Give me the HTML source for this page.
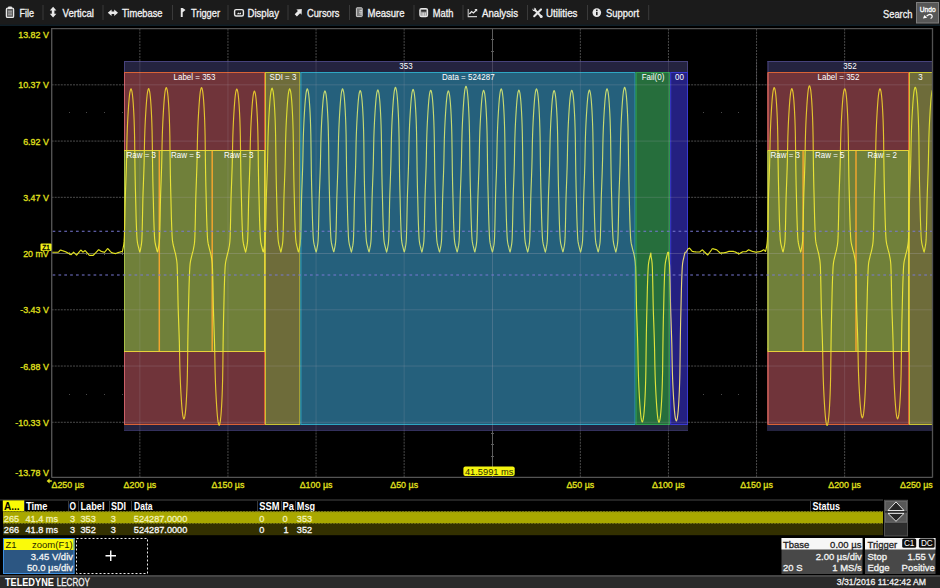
<!DOCTYPE html>
<html lang="en"><head><meta charset="utf-8"><title>ARINC 429 decode</title>
<style>html,body{margin:0;padding:0;background:#000;overflow:hidden}svg{display:block}text{white-space:pre}</style>
</head><body>
<svg width="940" height="588" viewBox="0 0 940 588" font-family='"Liberation Sans", sans-serif'>
<defs><clipPath id="gc"><rect x="52" y="29" width="880" height="448"/></clipPath></defs>
<rect x="0" y="0" width="940" height="588" fill="#000" />
<rect x="0" y="0" width="940" height="26" fill="#1b1b1b" />
<rect x="0" y="24.7" width="940" height="1.3" fill="#0f1f28" />
<text x="19.5" y="16.5" font-size="10" fill="#f2f2f2" stroke="#f2f2f2" stroke-width="0.3" text-anchor="start" textLength="14.5" lengthAdjust="spacingAndGlyphs" >File</text>
<line x1="43" y1="5" x2="43" y2="20" stroke="#3a3a3a" stroke-width="1" />
<text x="62.5" y="16.5" font-size="10" fill="#f2f2f2" stroke="#f2f2f2" stroke-width="0.3" text-anchor="start" textLength="31.5" lengthAdjust="spacingAndGlyphs" >Vertical</text>
<line x1="103" y1="5" x2="103" y2="20" stroke="#3a3a3a" stroke-width="1" />
<text x="122" y="16.5" font-size="10" fill="#f2f2f2" stroke="#f2f2f2" stroke-width="0.3" text-anchor="start" textLength="40.5" lengthAdjust="spacingAndGlyphs" >Timebase</text>
<line x1="172.5" y1="5" x2="172.5" y2="20" stroke="#3a3a3a" stroke-width="1" />
<text x="191" y="16.5" font-size="10" fill="#f2f2f2" stroke="#f2f2f2" stroke-width="0.3" text-anchor="start" textLength="29" lengthAdjust="spacingAndGlyphs" >Trigger</text>
<line x1="228" y1="5" x2="228" y2="20" stroke="#3a3a3a" stroke-width="1" />
<text x="247.5" y="16.5" font-size="10" fill="#f2f2f2" stroke="#f2f2f2" stroke-width="0.3" text-anchor="start" textLength="31.5" lengthAdjust="spacingAndGlyphs" >Display</text>
<line x1="288" y1="5" x2="288" y2="20" stroke="#3a3a3a" stroke-width="1" />
<text x="307" y="16.5" font-size="10" fill="#f2f2f2" stroke="#f2f2f2" stroke-width="0.3" text-anchor="start" textLength="32.5" lengthAdjust="spacingAndGlyphs" >Cursors</text>
<line x1="349.5" y1="5" x2="349.5" y2="20" stroke="#3a3a3a" stroke-width="1" />
<text x="367.5" y="16.5" font-size="10" fill="#f2f2f2" stroke="#f2f2f2" stroke-width="0.3" text-anchor="start" textLength="37" lengthAdjust="spacingAndGlyphs" >Measure</text>
<line x1="414" y1="5" x2="414" y2="20" stroke="#3a3a3a" stroke-width="1" />
<text x="432.8" y="16.5" font-size="10" fill="#f2f2f2" stroke="#f2f2f2" stroke-width="0.3" text-anchor="start" textLength="20.7" lengthAdjust="spacingAndGlyphs" >Math</text>
<line x1="463" y1="5" x2="463" y2="20" stroke="#3a3a3a" stroke-width="1" />
<text x="482" y="16.5" font-size="10" fill="#f2f2f2" stroke="#f2f2f2" stroke-width="0.3" text-anchor="start" textLength="36" lengthAdjust="spacingAndGlyphs" >Analysis</text>
<line x1="527.5" y1="5" x2="527.5" y2="20" stroke="#3a3a3a" stroke-width="1" />
<text x="546" y="16.5" font-size="10" fill="#f2f2f2" stroke="#f2f2f2" stroke-width="0.3" text-anchor="start" textLength="31.5" lengthAdjust="spacingAndGlyphs" >Utilities</text>
<line x1="587.5" y1="5" x2="587.5" y2="20" stroke="#3a3a3a" stroke-width="1" />
<text x="606" y="16.5" font-size="10" fill="#f2f2f2" stroke="#f2f2f2" stroke-width="0.3" text-anchor="start" textLength="33" lengthAdjust="spacingAndGlyphs" >Support</text>
<line x1="648.7" y1="5" x2="648.7" y2="20" stroke="#3a3a3a" stroke-width="1" />
<text x="883" y="17.6" font-size="10.5" fill="#f2f2f2" stroke="#f2f2f2" stroke-width="0.3" text-anchor="start" textLength="29.5" lengthAdjust="spacingAndGlyphs" >Search</text>
<rect x="6.4" y="8.2" width="7.2" height="9.2" rx="1.2" fill="#555" stroke="#e8e8e8" stroke-width="1.3"/><rect x="8" y="6.4" width="4" height="2.6" rx="0.8" fill="#e8e8e8"/><path d="M8 11.2h4M8 13h4M8 14.8h4" stroke="#bdbdbd" stroke-width="0.9"/>
<path d="M53.1 6.8 l3.3 3.6 h-2 v3.4 h2 l-3.3 3.6 l-3.3 -3.6 h2 v-3.4 h-2 z" fill="#e8e8e8"/>
<path d="M107.8 12.7 l3.8 -3.3 v2.1 h2.6 v-2.1 l3.8 3.3 l-3.8 3.3 v-2.1 h-2.6 v2.1 z" fill="#e8e8e8"/>
<path d="M180.8 7.9 h1.9 l2.8 2.2 l-2.8 2.2 v4.7 h-1.9 z" fill="#e8e8e8"/>
<rect x="234.6" y="9.6" width="8.8" height="6.4" rx="1.5" fill="none" stroke="#e8e8e8" stroke-width="1.4"/><path d="M236.8 14.2 l1.6 -1.8 l1.2 1.1 l1.4 -1.3 v2 z" fill="#e8e8e8"/>
<path d="M301.8 9 l-5.4 0.5 l1.5 1.5 l-3.2 3.2 l2.2 2.2 l3.2 -3.2 l1.5 1.5 z" fill="#e8e8e8"/>
<rect x="356.4" y="7.8" width="5.8" height="8.8" rx="0.6" fill="#7a7a7a" stroke="#cfcfcf" stroke-width="1"/><path d="M359.6 10.4 h2.4 M359 12.2 h3 M359.6 14 h2.4" stroke="#eee" stroke-width="0.8"/>
<rect x="419.9" y="8.7" width="7.6" height="7.8" rx="1.6" fill="#8a8a8a" stroke="#e8e8e8" stroke-width="1.3"/><rect x="421.2" y="10" width="5" height="1.6" fill="#2a2a2a"/><path d="M422.1 12.6 v3.2 M423.7 12.6 v3.2 M425.3 12.6 v3.2" stroke="#e8e8e8" stroke-width="0.9"/>
<path d="M468.2 9 v7.6 h8.8" stroke="#c8c8c8" stroke-width="1.1" fill="none"/><path d="M469.4 14 l2.2 -2.4 l1.8 1.4 l3 -3" stroke="#e8e8e8" stroke-width="1.3" fill="none"/><path d="M474.4 9 h2.8 v2.8 z" fill="#e8e8e8"/>
<path d="M534.4 9.6 l6.6 6.6 M541 9.4 l-6.8 6.8" stroke="#e8e8e8" stroke-width="2.1" stroke-linecap="round"/><circle cx="534.3" cy="9.5" r="1.8" fill="#e8e8e8"/><circle cx="541.2" cy="16.4" r="1.5" fill="#e8e8e8"/><circle cx="533.6" cy="8.8" r="0.9" fill="#1b1b1b"/>
<circle cx="596.8" cy="12.6" r="4.3" fill="#e8e8e8"/><rect x="596" y="11.8" width="1.6" height="3.4" fill="#222"/><rect x="596" y="9.6" width="1.6" height="1.4" fill="#222"/>
<rect x="916.5" y="2.5" width="22" height="20.5" fill="#575757" stroke="#7e7e7e" stroke-width="1"/>
<text x="919.8" y="11.5" font-size="7" fill="#fff" stroke="#fff" stroke-width="0.3" text-anchor="start" textLength="15.8" lengthAdjust="spacingAndGlyphs" >Undo</text>
<path d="M926.6 16.2 Q929.6 13.2 931.6 15 Q933.2 16.8 930.6 18.6" fill="none" stroke="#fff" stroke-width="1.2"/><path d="M922.9 18.5 l1.5 -3.6 l2.7 2.9 z" fill="#fff"/>
<line x1="139.85" y1="28.6" x2="139.85" y2="477" stroke="#4c4c4c" stroke-width="1" stroke-dasharray="2 1.06"/>
<line x1="227.95" y1="28.6" x2="227.95" y2="477" stroke="#4c4c4c" stroke-width="1" stroke-dasharray="2 1.06"/>
<line x1="316.05" y1="28.6" x2="316.05" y2="477" stroke="#4c4c4c" stroke-width="1" stroke-dasharray="2 1.06"/>
<line x1="404.15" y1="28.6" x2="404.15" y2="477" stroke="#4c4c4c" stroke-width="1" stroke-dasharray="2 1.06"/>
<line x1="580.35" y1="28.6" x2="580.35" y2="477" stroke="#4c4c4c" stroke-width="1" stroke-dasharray="2 1.06"/>
<line x1="668.45" y1="28.6" x2="668.45" y2="477" stroke="#4c4c4c" stroke-width="1" stroke-dasharray="2 1.06"/>
<line x1="756.55" y1="28.6" x2="756.55" y2="477" stroke="#4c4c4c" stroke-width="1" stroke-dasharray="2 1.06"/>
<line x1="844.65" y1="28.6" x2="844.65" y2="477" stroke="#4c4c4c" stroke-width="1" stroke-dasharray="2 1.06"/>
<line x1="51.6" y1="84.84" x2="932.5" y2="84.84" stroke="#4c4c4c" stroke-width="1" stroke-dasharray="2 1.06"/>
<line x1="51.6" y1="141.08" x2="932.5" y2="141.08" stroke="#4c4c4c" stroke-width="1" stroke-dasharray="2 1.06"/>
<line x1="51.6" y1="197.32" x2="932.5" y2="197.32" stroke="#4c4c4c" stroke-width="1" stroke-dasharray="2 1.06"/>
<line x1="51.6" y1="309.8" x2="932.5" y2="309.8" stroke="#4c4c4c" stroke-width="1" stroke-dasharray="2 1.06"/>
<line x1="51.6" y1="366.04" x2="932.5" y2="366.04" stroke="#4c4c4c" stroke-width="1" stroke-dasharray="2 1.06"/>
<line x1="51.6" y1="422.28" x2="932.5" y2="422.28" stroke="#4c4c4c" stroke-width="1" stroke-dasharray="2 1.06"/>
<path d="M69 112.5h1M86 112.5h1M104 112.5h1M122 112.5h1M139 112.5h1M157 112.5h1M174 112.5h1M192 112.5h1M210 112.5h1M227 112.5h1M245 112.5h1M263 112.5h1M280 112.5h1M298 112.5h1M315 112.5h1M333 112.5h1M351 112.5h1M368 112.5h1M386 112.5h1M403 112.5h1M421 112.5h1M439 112.5h1M456 112.5h1M474 112.5h1M492 112.5h1M509 112.5h1M527 112.5h1M544 112.5h1M562 112.5h1M580 112.5h1M597 112.5h1M615 112.5h1M632 112.5h1M650 112.5h1M668 112.5h1M685 112.5h1M703 112.5h1M721 112.5h1M738 112.5h1M756 112.5h1M773 112.5h1M791 112.5h1M809 112.5h1M826 112.5h1M844 112.5h1M862 112.5h1M879 112.5h1M897 112.5h1M914 112.5h1M69 394.5h1M86 394.5h1M104 394.5h1M122 394.5h1M139 394.5h1M157 394.5h1M174 394.5h1M192 394.5h1M210 394.5h1M227 394.5h1M245 394.5h1M263 394.5h1M280 394.5h1M298 394.5h1M315 394.5h1M333 394.5h1M351 394.5h1M368 394.5h1M386 394.5h1M403 394.5h1M421 394.5h1M439 394.5h1M456 394.5h1M474 394.5h1M492 394.5h1M509 394.5h1M527 394.5h1M544 394.5h1M562 394.5h1M580 394.5h1M597 394.5h1M615 394.5h1M632 394.5h1M650 394.5h1M668 394.5h1M685 394.5h1M703 394.5h1M721 394.5h1M738 394.5h1M756 394.5h1M773 394.5h1M791 394.5h1M809 394.5h1M826 394.5h1M844 394.5h1M862 394.5h1M879 394.5h1M897 394.5h1M914 394.5h1" stroke="#4a4a4a" stroke-width="1" fill="none"/>
<line x1="492.5" y1="28.6" x2="492.5" y2="477" stroke="#5c5c5c" stroke-width="1" />
<line x1="51.6" y1="253.5" x2="932.5" y2="253.5" stroke="#5c5c5c" stroke-width="1" />
<path d="M491.0 39.5h3M491.0 51.5h3M491.0 62.5h3M491.0 73.5h3M491.0 84.5h3M491.0 96.5h3M491.0 107.5h3M491.0 118.5h3M491.0 129.5h3M491.0 141.5h3M491.0 152.5h3M491.0 163.5h3M491.0 174.5h3M491.0 186.5h3M491.0 197.5h3M491.0 208.5h3M491.0 219.5h3M491.0 231.5h3M491.0 242.5h3M491.0 253.5h3M491.0 264.5h3M491.0 276.5h3M491.0 287.5h3M491.0 298.5h3M491.0 309.5h3M491.0 321.5h3M491.0 332.5h3M491.0 343.5h3M491.0 354.5h3M491.0 366.5h3M491.0 377.5h3M491.0 388.5h3M491.0 399.5h3M491.0 411.5h3M491.0 422.5h3M491.0 433.5h3M491.0 444.5h3M491.0 456.5h3M491.0 467.5h3M69.5 252.0v3M86.5 252.0v3M104.5 252.0v3M122.5 252.0v3M139.5 252.0v3M157.5 252.0v3M174.5 252.0v3M192.5 252.0v3M210.5 252.0v3M227.5 252.0v3M245.5 252.0v3M263.5 252.0v3M280.5 252.0v3M298.5 252.0v3M315.5 252.0v3M333.5 252.0v3M351.5 252.0v3M368.5 252.0v3M386.5 252.0v3M403.5 252.0v3M421.5 252.0v3M439.5 252.0v3M456.5 252.0v3M474.5 252.0v3M492.5 252.0v3M509.5 252.0v3M527.5 252.0v3M544.5 252.0v3M562.5 252.0v3M580.5 252.0v3M597.5 252.0v3M615.5 252.0v3M632.5 252.0v3M650.5 252.0v3M668.5 252.0v3M685.5 252.0v3M703.5 252.0v3M721.5 252.0v3M738.5 252.0v3M756.5 252.0v3M773.5 252.0v3M791.5 252.0v3M809.5 252.0v3M826.5 252.0v3M844.5 252.0v3M862.5 252.0v3M879.5 252.0v3M897.5 252.0v3M914.5 252.0v3" stroke="#5c5c5c" stroke-width="1" fill="none"/>
<g clip-path="url(#gc)">
<rect x="124" y="61" width="564" height="11" fill="#24233f" fill-opacity="1"/>
<line x1="124" y1="61.5" x2="688" y2="61.5" stroke="#47437c" stroke-width="1" />
<line x1="124.5" y1="61" x2="124.5" y2="431" stroke="#47437c" stroke-width="1" />
<line x1="687.5" y1="61" x2="687.5" y2="431" stroke="#47437c" stroke-width="1" />
<rect x="124" y="425" width="564" height="6" fill="#24233f" fill-opacity="1"/>
<line x1="124" y1="430.5" x2="688" y2="430.5" stroke="#33305c" stroke-width="1" />
<rect x="124" y="72" width="141" height="81" fill="#70343a" fill-opacity="1"/>
<rect x="124.5" y="72.5" width="140" height="80" fill="none" stroke="#d96336" stroke-width="1"/>
<rect x="124" y="348" width="141" height="77" fill="#70343a" fill-opacity="1"/>
<rect x="124.5" y="348.5" width="140" height="76" fill="none" stroke="#d96336" stroke-width="1"/>
<line x1="124.5" y1="73" x2="124.5" y2="150" stroke="#cc6068" stroke-width="1" />
<line x1="124.5" y1="352" x2="124.5" y2="424" stroke="#cc6068" stroke-width="1" />
<rect x="124" y="150" width="141" height="202" fill="#70803a" fill-opacity="1"/>
<rect x="124.5" y="150.5" width="140" height="201" fill="none" stroke="#e6d23a" stroke-width="1"/>
<line x1="159.3" y1="151" x2="159.3" y2="351" stroke="#f2a52e" stroke-width="1.5" />
<line x1="212.2" y1="151" x2="212.2" y2="351" stroke="#f2a52e" stroke-width="1.5" />
<line x1="124.5" y1="151" x2="124.5" y2="351" stroke="#a8c048" stroke-width="1" />
<rect x="265" y="72" width="35.4" height="353" fill="#6e6c3a" fill-opacity="1"/>
<rect x="265.5" y="72.5" width="34.4" height="352" fill="none" stroke="#c9c233" stroke-width="1"/>
<rect x="300.4" y="72" width="335.2" height="353" fill="#25607c" fill-opacity="1"/>
<rect x="300.9" y="72.5" width="334.2" height="352" fill="none" stroke="#2ea6c2" stroke-width="1"/>
<rect x="635.6" y="72" width="34.6" height="353" fill="#266e3c" fill-opacity="1"/>
<rect x="636.1" y="72.5" width="33.6" height="352" fill="none" stroke="#2fa052" stroke-width="1"/>
<rect x="670.2" y="72" width="17.8" height="353" fill="#242080" fill-opacity="1"/>
<rect x="670.7" y="72.5" width="16.8" height="352" fill="none" stroke="#3a3ad0" stroke-width="1"/>
<rect x="767.5" y="61" width="165.5" height="11" fill="#24233f" fill-opacity="1"/>
<line x1="767.5" y1="61.5" x2="933" y2="61.5" stroke="#47437c" stroke-width="1" />
<line x1="768" y1="61" x2="768" y2="431" stroke="#47437c" stroke-width="1" />
<rect x="767.5" y="425" width="165.5" height="6" fill="#24233f" fill-opacity="1"/>
<rect x="767.5" y="72" width="141.5" height="81" fill="#70343a" fill-opacity="1"/>
<rect x="768" y="72.5" width="140.5" height="80" fill="none" stroke="#d96336" stroke-width="1"/>
<rect x="767.5" y="348" width="141.5" height="77" fill="#70343a" fill-opacity="1"/>
<rect x="768" y="348.5" width="140.5" height="76" fill="none" stroke="#d96336" stroke-width="1"/>
<line x1="768" y1="73" x2="768" y2="150" stroke="#cc6068" stroke-width="1" />
<line x1="768" y1="352" x2="768" y2="424" stroke="#cc6068" stroke-width="1" />
<rect x="767.5" y="150" width="141.5" height="202" fill="#70803a" fill-opacity="1"/>
<rect x="768" y="150.5" width="140.5" height="201" fill="none" stroke="#e6d23a" stroke-width="1"/>
<line x1="803.1" y1="151" x2="803.1" y2="351" stroke="#f2a52e" stroke-width="1.5" />
<line x1="856" y1="151" x2="856" y2="351" stroke="#f2a52e" stroke-width="1.5" />
<line x1="768" y1="151" x2="768" y2="351" stroke="#a8c048" stroke-width="1" />
<rect x="909" y="72" width="31" height="353" fill="#6e6c3a" fill-opacity="1"/>
<rect x="909.5" y="72.5" width="30" height="352" fill="none" stroke="#c9c233" stroke-width="1"/>
<line x1="139.85" y1="61" x2="139.85" y2="431" stroke="#b8b0c0" stroke-width="1" stroke-opacity="0.17"/>
<line x1="227.95" y1="61" x2="227.95" y2="431" stroke="#b8b0c0" stroke-width="1" stroke-opacity="0.17"/>
<line x1="316.05" y1="61" x2="316.05" y2="431" stroke="#b8b0c0" stroke-width="1" stroke-opacity="0.17"/>
<line x1="404.15" y1="61" x2="404.15" y2="431" stroke="#b8b0c0" stroke-width="1" stroke-opacity="0.17"/>
<line x1="492.5" y1="61" x2="492.5" y2="431" stroke="#b8b0c0" stroke-width="1" stroke-opacity="0.24"/>
<line x1="580.35" y1="61" x2="580.35" y2="431" stroke="#b8b0c0" stroke-width="1" stroke-opacity="0.17"/>
<line x1="668.45" y1="61" x2="668.45" y2="431" stroke="#b8b0c0" stroke-width="1" stroke-opacity="0.17"/>
<line x1="756.55" y1="61" x2="756.55" y2="431" stroke="#b8b0c0" stroke-width="1" stroke-opacity="0.17"/>
<line x1="844.65" y1="61" x2="844.65" y2="431" stroke="#b8b0c0" stroke-width="1" stroke-opacity="0.17"/>
<line x1="124" y1="84.84" x2="688" y2="84.84" stroke="#b8b0c0" stroke-width="1" stroke-opacity="0.2"/>
<line x1="767.5" y1="84.84" x2="933" y2="84.84" stroke="#b8b0c0" stroke-width="1" stroke-opacity="0.2"/>
<line x1="124" y1="141.08" x2="688" y2="141.08" stroke="#b8b0c0" stroke-width="1" stroke-opacity="0.2"/>
<line x1="767.5" y1="141.08" x2="933" y2="141.08" stroke="#b8b0c0" stroke-width="1" stroke-opacity="0.2"/>
<line x1="124" y1="197.32" x2="688" y2="197.32" stroke="#b8b0c0" stroke-width="1" stroke-opacity="0.2"/>
<line x1="767.5" y1="197.32" x2="933" y2="197.32" stroke="#b8b0c0" stroke-width="1" stroke-opacity="0.2"/>
<line x1="124" y1="253.5" x2="688" y2="253.5" stroke="#b8b0c0" stroke-width="1" stroke-opacity="0.26"/>
<line x1="767.5" y1="253.5" x2="933" y2="253.5" stroke="#b8b0c0" stroke-width="1" stroke-opacity="0.26"/>
<line x1="124" y1="309.8" x2="688" y2="309.8" stroke="#b8b0c0" stroke-width="1" stroke-opacity="0.2"/>
<line x1="767.5" y1="309.8" x2="933" y2="309.8" stroke="#b8b0c0" stroke-width="1" stroke-opacity="0.2"/>
<line x1="124" y1="366.04" x2="688" y2="366.04" stroke="#b8b0c0" stroke-width="1" stroke-opacity="0.2"/>
<line x1="767.5" y1="366.04" x2="933" y2="366.04" stroke="#b8b0c0" stroke-width="1" stroke-opacity="0.2"/>
<line x1="124" y1="422.28" x2="688" y2="422.28" stroke="#b8b0c0" stroke-width="1" stroke-opacity="0.2"/>
<line x1="767.5" y1="422.28" x2="933" y2="422.28" stroke="#b8b0c0" stroke-width="1" stroke-opacity="0.2"/>
<defs><path id="wv" d="M52.10 252.2 L52.35 252.2 L52.60 252.2 L52.85 252.2 L53.10 252.2 L53.35 252.2 L53.60 252.2 L53.85 252.2 L54.10 252.2 L54.35 252.2 L54.60 252.2 L54.85 252.2 L55.10 252.2 L55.35 252.2 L55.60 252.2 L55.85 252.2 L56.10 252.2 L56.35 252.2 L56.60 252.2 L56.85 252.2 L57.10 252.2 L57.35 252.2 L57.60 252.2 L57.85 252.2 L58.10 252.2 L58.35 252.1 L58.60 251.9 L58.85 251.6 L59.10 251.4 L59.35 251.1 L59.60 250.8 L59.85 250.6 L60.10 250.3 L60.35 250.1 L60.60 250.1 L60.85 250.1 L61.10 250.2 L61.35 250.3 L61.60 250.4 L61.85 250.5 L62.10 250.6 L62.35 250.7 L62.60 250.7 L62.85 250.8 L63.10 250.9 L63.35 251.0 L63.60 251.1 L63.85 251.2 L64.10 251.2 L64.35 251.3 L64.60 251.4 L64.85 251.5 L65.10 251.6 L65.35 251.6 L65.60 251.8 L65.85 251.9 L66.10 252.0 L66.35 252.2 L66.60 252.3 L66.85 252.4 L67.10 252.6 L67.35 252.7 L67.60 252.8 L67.85 253.0 L68.10 253.1 L68.35 253.2 L68.60 253.4 L68.85 253.5 L69.10 253.6 L69.35 253.8 L69.60 253.9 L69.85 254.0 L70.10 254.2 L70.35 254.3 L70.60 254.4 L70.85 254.6 L71.10 254.7 L71.35 254.4 L71.60 254.2 L71.85 253.9 L72.10 253.7 L72.35 253.4 L72.60 253.2 L72.85 252.9 L73.10 252.7 L73.35 252.4 L73.60 252.2 L73.85 252.4 L74.10 252.7 L74.35 252.9 L74.60 253.2 L74.85 253.4 L75.10 253.6 L75.35 253.9 L75.60 254.1 L75.85 254.4 L76.10 254.6 L76.35 254.9 L76.60 255.1 L76.85 254.8 L77.10 254.5 L77.35 254.2 L77.60 253.9 L77.85 253.6 L78.10 253.3 L78.35 253.0 L78.60 252.7 L78.85 252.4 L79.10 252.1 L79.35 251.8 L79.60 251.5 L79.85 251.2 L80.10 250.9 L80.35 250.7 L80.60 250.4 L80.85 250.1 L81.10 250.2 L81.35 250.5 L81.60 250.7 L81.85 251.0 L82.10 251.3 L82.35 251.5 L82.60 251.8 L82.85 252.0 L83.10 252.1 L83.35 251.9 L83.60 251.7 L83.85 251.5 L84.10 251.3 L84.35 251.1 L84.60 250.9 L84.85 250.7 L85.10 250.5 L85.35 250.8 L85.60 251.1 L85.85 251.4 L86.10 251.6 L86.35 251.9 L86.60 252.2 L86.85 252.5 L87.10 252.8 L87.35 253.1 L87.60 253.3 L87.85 253.6 L88.10 253.9 L88.35 254.2 L88.60 254.5 L88.85 254.8 L89.10 255.1 L89.35 255.3 L89.60 255.4 L89.85 255.4 L90.10 255.4 L90.35 255.4 L90.60 255.4 L90.85 255.4 L91.10 255.4 L91.35 255.4 L91.60 255.4 L91.85 255.4 L92.10 255.4 L92.35 255.4 L92.60 255.4 L92.85 255.4 L93.10 255.4 L93.35 255.2 L93.60 255.0 L93.85 254.7 L94.10 254.5 L94.35 254.2 L94.60 253.9 L94.85 253.7 L95.10 253.4 L95.35 253.1 L95.60 252.9 L95.85 252.6 L96.10 252.3 L96.35 252.1 L96.60 251.8 L96.85 251.6 L97.10 251.3 L97.35 251.0 L97.60 250.8 L97.85 250.5 L98.10 250.2 L98.35 250.0 L98.60 249.7 L98.85 249.7 L99.10 249.9 L99.35 250.1 L99.60 250.3 L99.85 250.4 L100.10 250.6 L100.35 250.8 L100.60 251.0 L100.85 251.2 L101.10 251.3 L101.35 251.4 L101.60 251.5 L101.85 251.5 L102.10 251.6 L102.35 251.7 L102.60 251.8 L102.85 251.8 L103.10 251.9 L103.35 252.0 L103.60 252.0 L103.85 252.1 L104.10 252.2 L104.35 252.3 L104.60 252.2 L104.85 251.9 L105.10 251.6 L105.35 251.3 L105.60 251.0 L105.85 250.7 L106.10 250.4 L106.35 250.1 L106.60 249.8 L106.85 249.5 L107.10 249.2 L107.35 248.9 L107.60 248.6 L107.85 248.7 L108.10 248.9 L108.35 249.2 L108.60 249.5 L108.85 249.7 L109.10 250.0 L109.35 250.3 L109.60 250.5 L109.85 250.8 L110.10 251.1 L110.35 251.4 L110.60 251.6 L110.85 251.9 L111.10 252.2 L111.35 252.4 L111.60 252.6 L111.85 252.7 L112.10 252.8 L112.35 252.8 L112.60 252.9 L112.85 253.0 L113.10 253.0 L113.35 253.1 L113.60 253.2 L113.85 253.2 L114.10 253.3 L114.35 253.3 L114.60 253.4 L114.85 253.5 L115.10 253.5 L115.35 253.6 L115.60 253.5 L115.85 253.4 L116.10 253.3 L116.35 253.2 L116.60 253.2 L116.85 253.1 L117.10 253.0 L117.35 252.9 L117.60 252.8 L117.85 252.7 L118.10 252.6 L118.35 252.6 L118.60 252.5 L118.85 252.4 L119.10 252.3 L119.35 252.2 L119.60 252.2 L119.85 252.1 L120.10 252.0 L120.35 251.9 L120.60 251.9 L120.85 251.8 L121.10 251.7 L121.35 251.7 L121.60 251.6 L121.85 251.5 L122.10 251.5 L122.35 251.6 L122.60 250.6 L122.85 249.4 L123.10 248.1 L123.35 246.8 L123.60 245.5 L123.85 243.8 L124.10 241.4 L124.35 237.2 L124.60 228.5 L124.85 218.1 L125.10 204.9 L125.35 195.3 L125.60 188.3 L125.85 181.7 L126.10 174.7 L126.35 167.5 L126.60 157.9 L126.85 144.3 L127.10 134.7 L127.35 128.0 L127.60 122.4 L127.85 117.6 L128.10 113.3 L128.35 109.3 L128.60 105.5 L128.85 102.2 L129.10 99.2 L129.35 96.6 L129.60 94.4 L129.85 92.6 L130.10 91.3 L130.35 90.3 L130.60 89.5 L130.85 88.9 L131.10 88.9 L131.35 89.3 L131.60 90.1 L131.85 91.1 L132.10 92.3 L132.35 94.0 L132.60 96.2 L132.85 98.7 L133.10 101.7 L133.35 105.3 L133.60 109.5 L133.85 114.3 L134.10 120.0 L134.35 127.6 L134.60 137.8 L134.85 158.4 L135.10 175.0 L135.35 187.0 L135.60 196.5 L135.85 206.8 L136.10 217.1 L136.35 224.5 L136.60 230.9 L136.85 236.2 L137.10 239.8 L137.35 241.8 L137.60 243.4 L137.85 244.6 L138.10 245.6 L138.35 246.6 L138.60 247.6 L138.85 248.7 L139.10 249.7 L139.35 250.6 L139.60 251.5 L139.85 252.1 L140.10 251.2 L140.35 250.0 L140.60 248.8 L140.85 247.5 L141.10 246.2 L141.35 244.7 L141.60 242.7 L141.85 240.0 L142.10 233.4 L142.35 223.6 L142.60 211.8 L142.85 199.6 L143.10 191.7 L143.35 185.2 L143.60 178.2 L143.85 171.3 L144.10 163.3 L144.35 151.3 L144.60 138.7 L144.85 131.2 L145.10 125.0 L145.35 119.9 L145.60 115.3 L145.85 111.2 L146.10 107.3 L146.35 103.7 L146.60 100.5 L146.85 97.7 L147.10 95.3 L147.35 93.3 L147.60 91.7 L147.85 90.6 L148.10 89.7 L148.35 89.0 L148.60 88.6 L148.85 88.8 L149.10 89.5 L149.35 90.3 L149.60 91.4 L149.85 92.8 L150.10 94.8 L150.35 97.1 L150.60 99.9 L150.85 103.2 L151.10 107.1 L151.35 111.6 L151.60 116.7 L151.85 123.2 L152.10 131.9 L152.35 146.4 L152.60 166.9 L152.85 181.2 L153.10 191.6 L153.35 201.1 L153.60 211.9 L153.85 220.9 L154.10 227.7 L154.35 233.6 L154.60 238.2 L154.85 240.8 L155.10 242.6 L155.35 244.0 L155.60 245.1 L155.85 246.1 L156.10 247.1 L156.35 248.1 L156.60 249.2 L156.85 250.1 L157.10 251.0 L157.35 251.9 L157.60 251.7 L157.85 250.6 L158.10 249.4 L158.35 248.1 L158.60 246.8 L158.85 245.5 L159.10 243.8 L159.35 241.5 L159.60 237.4 L159.85 228.8 L160.10 218.3 L160.35 205.0 L160.60 195.2 L160.85 188.1 L161.10 181.5 L161.35 174.4 L161.60 167.1 L161.85 157.6 L162.10 144.0 L162.35 134.1 L162.60 127.3 L162.85 121.6 L163.10 116.7 L163.35 112.4 L163.60 108.3 L163.85 104.5 L164.10 101.1 L164.35 98.1 L164.60 95.5 L164.85 93.3 L165.10 91.4 L165.35 90.0 L165.60 89.0 L165.85 88.2 L166.10 87.6 L166.35 87.6 L166.60 88.0 L166.85 88.8 L167.10 89.7 L167.35 90.9 L167.60 92.7 L167.85 94.8 L168.10 97.3 L168.35 100.4 L168.60 104.0 L168.85 108.2 L169.10 113.0 L169.35 118.7 L169.60 126.2 L169.85 136.4 L170.10 156.8 L170.35 173.8 L170.60 186.0 L170.85 195.7 L171.10 206.0 L171.35 216.4 L171.60 224.0 L171.85 230.5 L172.10 235.9 L172.35 239.6 L172.60 241.7 L172.85 243.2 L173.10 244.5 L173.35 245.6 L173.60 246.5 L173.85 247.5 L174.10 248.6 L174.35 249.6 L174.60 250.6 L174.85 251.5 L175.10 252.3 L175.35 253.2 L175.60 254.3 L175.85 255.6 L176.10 257.0 L176.35 258.3 L176.60 259.8 L176.85 261.8 L177.10 264.5 L177.35 271.0 L177.60 281.0 L177.85 292.8 L178.10 305.5 L178.35 313.6 L178.60 320.3 L178.85 327.4 L179.10 334.4 L179.35 342.4 L179.60 354.5 L179.85 367.5 L180.10 375.3 L180.35 381.6 L180.60 386.9 L180.85 391.6 L181.10 395.8 L181.35 399.8 L181.60 403.5 L181.85 406.8 L182.10 409.6 L182.35 412.0 L182.60 414.1 L182.85 415.8 L183.10 416.9 L183.35 417.9 L183.60 418.6 L183.85 419.0 L184.10 418.8 L184.35 418.1 L184.60 417.3 L184.85 416.2 L185.10 414.7 L185.35 412.8 L185.60 410.4 L185.85 407.6 L186.10 404.3 L186.35 400.3 L186.60 395.8 L186.85 390.5 L187.10 384.0 L187.35 375.2 L187.60 361.0 L187.85 339.8 L188.10 325.1 L188.35 314.4 L188.60 304.7 L188.85 293.7 L189.10 284.4 L189.35 277.5 L189.60 271.4 L189.85 266.7 L190.10 263.9 L190.35 262.1 L190.60 260.6 L190.85 259.5 L191.10 258.5 L191.35 257.5 L191.60 256.4 L191.85 255.3 L192.10 254.3 L192.35 253.4 L192.60 252.5 L192.85 251.7 L193.10 250.7 L193.35 249.5 L193.60 248.2 L193.85 246.9 L194.10 245.5 L194.35 243.9 L194.60 241.6 L194.85 237.6 L195.10 229.2 L195.35 218.8 L195.60 205.5 L195.85 195.5 L196.10 188.4 L196.35 181.7 L196.60 174.6 L196.85 167.4 L197.10 158.1 L197.35 144.5 L197.60 134.4 L197.85 127.5 L198.10 121.8 L198.35 116.9 L198.60 112.5 L198.85 108.5 L199.10 104.7 L199.35 101.2 L199.60 98.2 L199.85 95.6 L200.10 93.3 L200.35 91.4 L200.60 90.1 L200.85 89.1 L201.10 88.2 L201.35 87.7 L201.60 87.6 L201.85 88.0 L202.10 88.7 L202.35 89.7 L202.60 90.9 L202.85 92.6 L203.10 94.7 L203.35 97.2 L203.60 100.3 L203.85 103.9 L204.10 108.0 L204.35 112.8 L204.60 118.5 L204.85 125.9 L205.10 136.0 L205.35 155.9 L205.60 173.2 L205.85 185.6 L206.10 195.3 L206.35 205.5 L206.60 216.1 L206.85 223.8 L207.10 230.3 L207.35 235.7 L207.60 239.5 L207.85 241.6 L208.10 243.2 L208.35 244.5 L208.60 245.5 L208.85 246.5 L209.10 247.5 L209.35 248.6 L209.60 249.6 L209.85 250.5 L210.10 251.4 L210.35 252.3 L210.60 253.2 L210.85 254.4 L211.10 255.7 L211.35 257.1 L211.60 258.4 L211.85 260.0 L212.10 262.0 L212.35 264.8 L212.60 271.3 L212.85 281.6 L213.10 293.8 L213.35 307.1 L213.60 315.6 L213.85 322.6 L214.10 329.9 L214.35 337.2 L214.60 345.5 L214.85 357.8 L215.10 371.4 L215.35 379.7 L215.60 386.3 L215.85 391.8 L216.10 396.6 L216.35 401.1 L216.60 405.2 L216.85 409.1 L217.10 412.5 L217.35 415.5 L217.60 418.0 L217.85 420.2 L218.10 421.9 L218.35 423.1 L218.60 424.1 L218.85 424.9 L219.10 425.3 L219.35 425.1 L219.60 424.4 L219.85 423.5 L220.10 422.5 L220.35 421.0 L220.60 418.9 L220.85 416.5 L221.10 413.6 L221.35 410.1 L221.60 406.1 L221.85 401.4 L222.10 396.0 L222.35 389.3 L222.60 380.3 L222.85 366.0 L223.10 343.8 L223.35 328.4 L223.60 317.1 L223.85 307.1 L224.10 295.7 L224.35 286.0 L224.60 278.7 L224.85 272.3 L225.10 267.4 L225.35 264.4 L225.60 262.5 L225.85 261.0 L226.10 259.8 L226.35 258.7 L226.60 257.7 L226.85 256.6 L227.10 255.5 L227.35 254.5 L227.60 253.5 L227.85 252.6 L228.10 251.7 L228.35 250.7 L228.60 249.6 L228.85 248.3 L229.10 247.0 L229.35 245.7 L229.60 244.0 L229.85 241.8 L230.10 238.0 L230.35 229.8 L230.60 219.5 L230.85 206.5 L231.10 196.3 L231.35 189.2 L231.60 182.7 L231.85 175.6 L232.10 168.5 L232.35 159.5 L232.60 146.0 L232.85 135.8 L233.10 128.9 L233.35 123.2 L233.60 118.3 L233.85 114.0 L234.10 109.9 L234.35 106.1 L234.60 102.7 L234.85 99.7 L235.10 97.1 L235.35 94.9 L235.60 93.0 L235.85 91.6 L236.10 90.6 L236.35 89.8 L236.60 89.2 L236.85 89.0 L237.10 89.5 L237.35 90.2 L237.60 91.1 L237.85 92.3 L238.10 94.0 L238.35 96.1 L238.60 98.5 L238.85 101.5 L239.10 105.0 L239.35 109.2 L239.60 113.9 L239.85 119.4 L240.10 126.7 L240.35 136.6 L240.60 155.9 L240.85 173.4 L241.10 185.8 L241.35 195.5 L241.60 205.5 L241.85 216.0 L242.10 223.7 L242.35 230.2 L242.60 235.7 L242.85 239.5 L243.10 241.6 L243.35 243.2 L243.60 244.5 L243.85 245.5 L244.10 246.5 L244.35 247.5 L244.60 248.6 L244.85 249.6 L245.10 250.5 L245.35 251.4 L245.60 252.2 L245.85 251.3 L246.10 250.2 L246.35 249.0 L246.60 247.7 L246.85 246.4 L247.10 245.0 L247.35 243.2 L247.60 240.6 L247.85 234.7 L248.10 225.2 L248.35 214.1 L248.60 201.5 L248.85 193.5 L249.10 186.9 L249.35 180.2 L249.60 173.3 L249.85 165.7 L250.10 154.5 L250.35 141.6 L250.60 133.8 L250.85 127.6 L251.10 122.5 L251.35 117.9 L251.60 113.8 L251.85 109.9 L252.10 106.4 L252.35 103.2 L252.60 100.4 L252.85 98.0 L253.10 96.0 L253.35 94.3 L253.60 93.2 L253.85 92.2 L254.10 91.5 L254.35 91.1 L254.60 91.3 L254.85 91.9 L255.10 92.7 L255.35 93.7 L255.60 95.1 L255.85 97.0 L256.10 99.2 L256.35 101.9 L256.60 105.1 L256.85 108.8 L257.10 113.2 L257.35 118.1 L257.60 124.3 L257.85 132.6 L258.10 145.4 L258.35 166.3 L258.60 180.8 L258.85 191.4 L259.10 200.7 L259.35 211.3 L259.60 220.5 L259.85 227.3 L260.10 233.3 L260.35 237.9 L260.60 240.8 L260.85 242.6 L261.10 244.0 L261.35 245.1 L261.60 246.1 L261.85 247.0 L262.10 248.1 L262.35 249.1 L262.60 250.0 L262.85 251.0 L263.10 251.8 L263.35 251.8 L263.60 250.8 L263.85 249.6 L264.10 248.3 L264.35 247.0 L264.60 245.7 L264.85 244.1 L265.10 241.8 L265.35 238.2 L265.60 230.0 L265.85 219.8 L266.10 206.8 L266.35 196.4 L266.60 189.2 L266.85 182.6 L267.10 175.5 L267.35 168.4 L267.60 159.5 L267.85 146.0 L268.10 135.5 L268.35 128.5 L268.60 122.8 L268.85 117.8 L269.10 113.5 L269.35 109.4 L269.60 105.6 L269.85 102.1 L270.10 99.0 L270.35 96.4 L270.60 94.2 L270.85 92.3 L271.10 90.8 L271.35 89.8 L271.60 89.0 L271.85 88.4 L272.10 88.2 L272.35 88.6 L272.60 89.4 L272.85 90.3 L273.10 91.4 L273.35 93.1 L273.60 95.2 L273.85 97.7 L274.10 100.7 L274.35 104.2 L274.60 108.3 L274.85 113.0 L275.10 118.5 L275.35 125.7 L275.60 135.5 L275.85 154.5 L276.10 172.4 L276.35 185.1 L276.60 194.8 L276.85 204.8 L277.10 215.5 L277.35 223.3 L277.60 229.9 L277.85 235.4 L278.10 239.3 L278.35 241.5 L278.60 243.1 L278.85 244.4 L279.10 245.5 L279.35 246.4 L279.60 247.4 L279.85 248.5 L280.10 249.5 L280.35 250.5 L280.60 251.4 L280.85 252.2 L281.10 251.3 L281.35 250.2 L281.60 249.0 L281.85 247.7 L282.10 246.4 L282.35 245.0 L282.60 243.1 L282.85 240.5 L283.10 234.8 L283.35 225.3 L283.60 214.1 L283.85 201.2 L284.10 192.9 L284.35 186.3 L284.60 179.4 L284.85 172.5 L285.10 164.8 L285.35 153.7 L285.60 140.5 L285.85 132.4 L286.10 126.1 L286.35 120.8 L286.60 116.2 L286.85 112.0 L287.10 108.0 L287.35 104.4 L287.60 101.1 L287.85 98.3 L288.10 95.9 L288.35 93.8 L288.60 92.1 L288.85 90.9 L289.10 90.0 L289.35 89.3 L289.60 88.8 L289.85 89.0 L290.10 89.6 L290.35 90.4 L290.60 91.4 L290.85 92.8 L291.10 94.7 L291.35 96.9 L291.60 99.6 L291.85 102.8 L292.10 106.6 L292.35 111.0 L292.60 116.0 L292.85 122.2 L293.10 130.5 L293.35 143.1 L293.60 164.4 L293.85 179.3 L294.10 190.1 L294.35 199.6 L294.60 210.2 L294.85 219.8 L295.10 226.7 L295.35 232.8 L295.60 237.6 L295.85 240.5 L296.10 242.4 L296.35 243.8 L296.60 245.0 L296.85 246.0 L297.10 246.9 L297.35 248.0 L297.60 249.0 L297.85 250.0 L298.10 250.9 L298.35 251.8 L298.60 251.8 L298.85 250.8 L299.10 249.7 L299.35 248.4 L299.60 247.1 L299.85 245.8 L300.10 244.2 L300.35 242.0 L300.60 238.5 L300.85 230.5 L301.10 220.3 L301.35 207.5 L301.60 196.9 L301.85 189.7 L302.10 183.1 L302.35 176.1 L302.60 169.0 L302.85 160.3 L303.10 147.0 L303.35 136.2 L303.60 129.2 L303.85 123.4 L304.10 118.5 L304.35 114.1 L304.60 110.1 L304.85 106.3 L305.10 102.8 L305.35 99.7 L305.60 97.1 L305.85 94.9 L306.10 92.9 L306.35 91.5 L306.60 90.5 L306.85 89.6 L307.10 89.0 L307.35 88.8 L307.60 89.2 L307.85 89.9 L308.10 90.9 L308.35 92.0 L308.60 93.6 L308.85 95.7 L309.10 98.1 L309.35 101.1 L309.60 104.6 L309.85 108.6 L310.10 113.3 L310.35 118.8 L310.60 125.9 L310.85 135.5 L311.10 154.0 L311.35 172.1 L311.60 184.9 L311.85 194.7 L312.10 204.6 L312.35 215.2 L312.60 223.1 L312.85 229.7 L313.10 235.3 L313.35 239.2 L313.60 241.5 L313.85 243.1 L314.10 244.4 L314.35 245.4 L314.60 246.4 L314.85 247.4 L315.10 248.5 L315.35 249.5 L315.60 250.4 L315.85 251.3 L316.10 252.2 L316.35 251.4 L316.60 250.3 L316.85 249.1 L317.10 247.8 L317.35 246.5 L317.60 245.1 L317.85 243.3 L318.10 240.8 L318.35 235.4 L318.60 226.0 L318.85 215.1 L319.10 202.2 L319.35 194.0 L319.60 187.4 L319.85 180.7 L320.10 173.8 L320.35 166.3 L320.60 155.5 L320.85 142.3 L321.10 134.2 L321.35 127.9 L321.60 122.7 L321.85 118.1 L322.10 114.0 L322.35 110.0 L322.60 106.4 L322.85 103.2 L323.10 100.4 L323.35 98.0 L323.60 95.9 L323.85 94.2 L324.10 93.0 L324.35 92.1 L324.60 91.4 L324.85 90.9 L325.10 91.1 L325.35 91.6 L325.60 92.4 L325.85 93.4 L326.10 94.7 L326.35 96.6 L326.60 98.8 L326.85 101.4 L327.10 104.6 L327.35 108.3 L327.60 112.6 L327.85 117.6 L328.10 123.6 L328.35 131.7 L328.60 143.7 L328.85 164.8 L329.10 179.7 L329.35 190.6 L329.60 199.9 L329.85 210.4 L330.10 219.9 L330.35 226.7 L330.60 232.8 L330.85 237.6 L331.10 240.6 L331.35 242.4 L331.60 243.8 L331.85 245.0 L332.10 246.0 L332.35 247.0 L332.60 248.0 L332.85 249.0 L333.10 250.0 L333.35 250.9 L333.60 251.7 L333.85 251.8 L334.10 250.9 L334.35 249.7 L334.60 248.4 L334.85 247.1 L335.10 245.8 L335.35 244.2 L335.60 242.1 L335.85 238.7 L336.10 230.9 L336.35 220.7 L336.60 208.0 L336.85 197.2 L337.10 189.9 L337.35 183.4 L337.60 176.3 L337.85 169.3 L338.10 160.7 L338.35 147.5 L338.60 136.6 L338.85 129.5 L339.10 123.7 L339.35 118.7 L339.60 114.3 L339.85 110.2 L340.10 106.4 L340.35 102.9 L340.60 99.8 L340.85 97.2 L341.10 94.9 L341.35 93.0 L341.60 91.5 L341.85 90.5 L342.10 89.6 L342.35 89.0 L342.60 88.8 L342.85 89.2 L343.10 89.9 L343.35 90.8 L343.60 91.9 L343.85 93.5 L344.10 95.6 L344.35 98.0 L344.60 101.0 L344.85 104.4 L345.10 108.5 L345.35 113.1 L345.60 118.5 L345.85 125.5 L346.10 135.1 L346.35 153.0 L346.60 171.5 L346.85 184.5 L347.10 194.3 L347.35 204.2 L347.60 214.8 L347.85 222.9 L348.10 229.5 L348.35 235.1 L348.60 239.1 L348.85 241.4 L349.10 243.0 L349.35 244.3 L349.60 245.4 L349.85 246.4 L350.10 247.4 L350.35 248.4 L350.60 249.4 L350.85 250.4 L351.10 251.3 L351.35 252.1 L351.60 251.4 L351.85 250.3 L352.10 249.2 L352.35 247.8 L352.60 246.6 L352.85 245.2 L353.10 243.4 L353.35 240.9 L353.60 235.6 L353.85 226.4 L354.10 215.5 L354.35 202.5 L354.60 194.1 L354.85 187.5 L355.10 180.8 L355.35 173.9 L355.60 166.4 L355.85 155.8 L356.10 142.5 L356.35 134.2 L356.60 127.9 L356.85 122.6 L357.10 118.0 L357.35 113.8 L357.60 109.8 L357.85 106.2 L358.10 103.0 L358.35 100.1 L358.60 97.7 L358.85 95.6 L359.10 93.9 L359.35 92.7 L359.60 91.8 L359.85 91.0 L360.10 90.6 L360.35 90.6 L360.60 91.2 L360.85 92.0 L361.10 93.0 L361.35 94.3 L361.60 96.1 L361.85 98.3 L362.10 101.0 L362.35 104.1 L362.60 107.8 L362.85 112.1 L363.10 117.0 L363.35 123.0 L363.60 131.0 L363.85 142.7 L364.10 163.9 L364.35 179.0 L364.60 190.0 L364.85 199.4 L365.10 209.8 L365.35 219.5 L365.60 226.4 L365.85 232.5 L366.10 237.4 L366.35 240.5 L366.60 242.3 L366.85 243.8 L367.10 244.9 L367.35 245.9 L367.60 246.9 L367.85 247.9 L368.10 249.0 L368.35 249.9 L368.60 250.8 L368.85 251.7 L369.10 251.9 L369.35 250.9 L369.60 249.8 L369.85 248.5 L370.10 247.2 L370.35 245.9 L370.60 244.4 L370.85 242.2 L371.10 239.0 L371.35 231.4 L371.60 221.4 L371.85 208.9 L372.10 197.9 L372.35 190.6 L372.60 184.1 L372.85 177.1 L373.10 170.2 L373.35 161.8 L373.60 148.8 L373.85 137.6 L374.10 130.6 L374.35 124.7 L374.60 119.8 L374.85 115.4 L375.10 111.3 L375.35 107.5 L375.60 104.1 L375.85 101.0 L376.10 98.3 L376.35 96.1 L376.60 94.1 L376.85 92.6 L377.10 91.6 L377.35 90.8 L377.60 90.1 L377.85 89.9 L378.10 90.3 L378.35 91.0 L378.60 91.9 L378.85 92.9 L379.10 94.5 L379.35 96.6 L379.60 99.0 L379.85 101.8 L380.10 105.3 L380.35 109.3 L380.60 113.9 L380.85 119.2 L381.10 126.1 L381.35 135.4 L381.60 152.8 L381.85 171.4 L382.10 184.5 L382.35 194.3 L382.60 204.1 L382.85 214.7 L383.10 222.8 L383.35 229.4 L383.60 235.0 L383.85 239.1 L384.10 241.4 L384.35 243.0 L384.60 244.3 L384.85 245.4 L385.10 246.4 L385.35 247.4 L385.60 248.4 L385.85 249.4 L386.10 250.4 L386.35 251.3 L386.60 252.1 L386.85 251.4 L387.10 250.4 L387.35 249.1 L387.60 247.8 L387.85 246.5 L388.10 245.1 L388.35 243.3 L388.60 240.8 L388.85 235.6 L389.10 226.3 L389.35 215.3 L389.60 202.0 L389.85 193.3 L390.10 186.5 L390.35 179.6 L390.60 172.6 L390.85 165.1 L391.10 154.4 L391.35 140.8 L391.60 132.2 L391.85 125.6 L392.10 120.2 L392.35 115.5 L392.60 111.2 L392.85 107.2 L393.10 103.5 L393.35 100.1 L393.60 97.2 L393.85 94.7 L394.10 92.6 L394.35 90.8 L394.60 89.6 L394.85 88.6 L395.10 87.8 L395.35 87.4 L395.60 87.4 L395.85 88.0 L396.10 88.8 L396.35 89.8 L396.60 91.1 L396.85 93.0 L397.10 95.2 L397.35 97.8 L397.60 101.0 L397.85 104.8 L398.10 109.1 L398.35 114.1 L398.60 120.2 L398.85 128.2 L399.10 139.8 L399.35 161.5 L399.60 177.1 L399.85 188.4 L400.10 197.9 L400.35 208.5 L400.60 218.5 L400.85 225.6 L401.10 231.9 L401.35 236.9 L401.60 240.2 L401.85 242.1 L402.10 243.6 L402.35 244.8 L402.60 245.8 L402.85 246.8 L403.10 247.8 L403.35 248.8 L403.60 249.8 L403.85 250.8 L404.10 251.7 L404.35 251.9 L404.60 250.9 L404.85 249.8 L405.10 248.6 L405.35 247.2 L405.60 245.9 L405.85 244.4 L406.10 242.3 L406.35 239.2 L406.60 231.7 L406.85 221.7 L407.10 209.3 L407.35 198.1 L407.60 190.7 L407.85 184.2 L408.10 177.2 L408.35 170.2 L408.60 161.9 L408.85 149.0 L409.10 137.6 L409.35 130.5 L409.60 124.6 L409.85 119.6 L410.10 115.2 L410.35 111.1 L410.60 107.2 L410.85 103.7 L411.10 100.6 L411.35 97.9 L411.60 95.7 L411.85 93.7 L412.10 92.2 L412.35 91.2 L412.60 90.3 L412.85 89.7 L413.10 89.4 L413.35 89.7 L413.60 90.4 L413.85 91.3 L414.10 92.4 L414.35 94.0 L414.60 96.0 L414.85 98.4 L415.10 101.3 L415.35 104.7 L415.60 108.6 L415.85 113.2 L416.10 118.6 L416.35 125.4 L416.60 134.6 L416.85 151.5 L417.10 170.5 L417.35 183.8 L417.60 193.8 L417.85 203.5 L418.10 214.2 L418.35 222.4 L418.60 229.1 L418.85 234.7 L419.10 238.9 L419.35 241.3 L419.60 242.9 L419.85 244.3 L420.10 245.4 L420.35 246.3 L420.60 247.3 L420.85 248.4 L421.10 249.4 L421.35 250.3 L421.60 251.2 L421.85 252.1 L422.10 251.5 L422.35 250.4 L422.60 249.2 L422.85 247.9 L423.10 246.7 L423.35 245.3 L423.60 243.5 L423.85 241.1 L424.10 236.2 L424.35 227.1 L424.60 216.5 L424.85 203.3 L425.10 194.6 L425.35 187.8 L425.60 181.2 L425.85 174.2 L426.10 166.9 L426.35 156.6 L426.60 143.2 L426.85 134.5 L427.10 128.0 L427.35 122.6 L427.60 118.0 L427.85 113.8 L428.10 109.8 L428.35 106.1 L428.60 102.8 L428.85 99.9 L429.10 97.5 L429.35 95.4 L429.60 93.6 L429.85 92.4 L430.10 91.4 L430.35 90.7 L430.60 90.2 L430.85 90.2 L431.10 90.7 L431.35 91.5 L431.60 92.5 L431.85 93.8 L432.10 95.6 L432.35 97.8 L432.60 100.4 L432.85 103.5 L433.10 107.1 L433.35 111.4 L433.60 116.2 L433.85 122.1 L434.10 130.0 L434.35 141.0 L434.60 162.3 L434.85 177.8 L435.10 189.1 L435.35 198.5 L435.60 208.9 L435.85 218.7 L436.10 225.8 L436.35 232.0 L436.60 237.0 L436.85 240.3 L437.10 242.2 L437.35 243.7 L437.60 244.8 L437.85 245.9 L438.10 246.8 L438.35 247.8 L438.60 248.9 L438.85 249.8 L439.10 250.8 L439.35 251.6 L439.60 252.0 L439.85 251.0 L440.10 249.9 L440.35 248.6 L440.60 247.3 L440.85 246.1 L441.10 244.5 L441.35 242.5 L441.60 239.5 L441.85 232.3 L442.10 222.4 L442.35 210.2 L442.60 198.9 L442.85 191.5 L443.10 185.1 L443.35 178.1 L443.60 171.3 L443.85 163.1 L444.10 150.5 L444.35 139.0 L444.60 131.8 L444.85 125.9 L445.10 121.0 L445.35 116.6 L445.60 112.5 L445.85 108.7 L446.10 105.2 L446.35 102.1 L446.60 99.5 L446.85 97.2 L447.10 95.2 L447.35 93.7 L447.60 92.7 L447.85 91.8 L448.10 91.2 L448.35 90.9 L448.60 91.2 L448.85 91.9 L449.10 92.8 L449.35 93.8 L449.60 95.4 L449.85 97.4 L450.10 99.7 L450.35 102.5 L450.60 105.9 L450.85 109.8 L451.10 114.3 L451.35 119.6 L451.60 126.2 L451.85 135.3 L452.10 151.5 L452.35 170.7 L452.60 184.0 L452.85 193.9 L453.10 203.5 L453.35 214.1 L453.60 222.4 L453.85 229.0 L454.10 234.7 L454.35 238.9 L454.60 241.3 L454.85 243.0 L455.10 244.3 L455.35 245.4 L455.60 246.3 L455.85 247.3 L456.10 248.4 L456.35 249.4 L456.60 250.3 L456.85 251.2 L457.10 252.0 L457.35 251.5 L457.60 250.4 L457.85 249.2 L458.10 247.9 L458.35 246.6 L458.60 245.2 L458.85 243.4 L459.10 240.9 L459.35 236.1 L459.60 226.9 L459.85 216.1 L460.10 202.6 L460.35 193.5 L460.60 186.5 L460.85 179.8 L461.10 172.6 L461.35 165.1 L461.60 154.8 L461.85 141.0 L462.10 132.0 L462.35 125.3 L462.60 119.7 L462.85 114.9 L463.10 110.6 L463.35 106.5 L463.60 102.8 L463.85 99.4 L464.10 96.4 L464.35 93.9 L464.60 91.7 L464.85 89.8 L465.10 88.6 L465.35 87.6 L465.60 86.8 L465.85 86.3 L466.10 86.3 L466.35 86.8 L466.60 87.6 L466.85 88.6 L467.10 89.9 L467.35 91.7 L467.60 94.0 L467.85 96.6 L468.10 99.7 L468.35 103.5 L468.60 107.8 L468.85 112.8 L469.10 118.7 L469.35 126.7 L469.60 137.7 L469.85 159.4 L470.10 175.5 L470.35 187.2 L470.60 196.8 L470.85 207.4 L471.10 217.6 L471.35 224.9 L471.60 231.3 L471.85 236.5 L472.10 239.9 L472.35 241.9 L472.60 243.4 L472.85 244.6 L473.10 245.7 L473.35 246.6 L473.60 247.7 L473.85 248.7 L474.10 249.8 L474.35 250.7 L474.60 251.6 L474.85 252.0 L475.10 251.0 L475.35 249.9 L475.60 248.7 L475.85 247.4 L476.10 246.1 L476.35 244.6 L476.60 242.6 L476.85 239.6 L477.10 232.6 L477.35 222.7 L477.60 210.6 L477.85 199.1 L478.10 191.6 L478.35 185.1 L478.60 178.1 L478.85 171.2 L479.10 163.2 L479.35 150.7 L479.60 138.9 L479.85 131.6 L480.10 125.7 L480.35 120.7 L480.60 116.3 L480.85 112.2 L481.10 108.3 L481.35 104.8 L481.60 101.7 L481.85 99.0 L482.10 96.7 L482.35 94.7 L482.60 93.2 L482.85 92.1 L483.10 91.3 L483.35 90.6 L483.60 90.3 L483.85 90.6 L484.10 91.3 L484.35 92.1 L484.60 93.2 L484.85 94.7 L485.10 96.7 L485.35 99.0 L485.60 101.8 L485.85 105.2 L486.10 109.1 L486.35 113.6 L486.60 118.8 L486.85 125.4 L487.10 134.4 L487.35 150.2 L487.60 169.7 L487.85 183.3 L488.10 193.3 L488.35 202.9 L488.60 213.6 L488.85 222.0 L489.10 228.7 L489.35 234.4 L489.60 238.7 L489.85 241.2 L490.10 242.9 L490.35 244.2 L490.60 245.3 L490.85 246.3 L491.10 247.3 L491.35 248.3 L491.60 249.3 L491.85 250.3 L492.10 251.2 L492.35 252.0 L492.60 251.5 L492.85 250.5 L493.10 249.3 L493.35 248.0 L493.60 246.7 L493.85 245.4 L494.10 243.6 L494.35 241.2 L494.60 236.7 L494.85 227.7 L495.10 217.2 L495.35 203.9 L495.60 194.7 L495.85 187.8 L496.10 181.2 L496.35 174.2 L496.60 166.8 L496.85 156.9 L497.10 143.3 L497.35 134.1 L497.60 127.5 L497.85 122.0 L498.10 117.3 L498.35 113.0 L498.60 109.0 L498.85 105.3 L499.10 101.9 L499.35 98.9 L499.60 96.4 L499.85 94.3 L500.10 92.5 L500.35 91.2 L500.60 90.2 L500.85 89.4 L501.10 88.9 L501.35 88.9 L501.60 89.4 L501.85 90.2 L502.10 91.1 L502.35 92.4 L502.60 94.2 L502.85 96.3 L503.10 98.9 L503.35 102.0 L503.60 105.6 L503.85 109.9 L504.10 114.7 L504.35 120.6 L504.60 128.3 L504.85 138.9 L505.10 160.1 L505.35 176.1 L505.60 187.8 L505.85 197.3 L506.10 207.6 L506.35 217.8 L506.60 225.1 L506.85 231.4 L507.10 236.6 L507.35 240.0 L507.60 242.0 L507.85 243.5 L508.10 244.7 L508.35 245.7 L508.60 246.7 L508.85 247.7 L509.10 248.8 L509.35 249.8 L509.60 250.7 L509.85 251.6 L510.10 252.0 L510.35 251.1 L510.60 250.0 L510.85 248.7 L511.10 247.4 L511.35 246.1 L511.60 244.6 L511.85 242.6 L512.10 239.8 L512.35 232.9 L512.60 223.0 L512.85 211.1 L513.10 199.4 L513.35 191.7 L513.60 185.3 L513.85 178.3 L514.10 171.4 L514.35 163.4 L514.60 151.1 L514.85 139.1 L515.10 131.8 L515.35 125.8 L515.60 120.7 L515.85 116.3 L516.10 112.1 L516.35 108.3 L516.60 104.8 L516.85 101.6 L517.10 98.9 L517.35 96.6 L517.60 94.6 L517.85 93.0 L518.10 92.0 L518.35 91.1 L518.60 90.4 L518.85 90.1 L519.10 90.4 L519.35 91.0 L519.60 91.9 L519.85 92.9 L520.10 94.4 L520.35 96.4 L520.60 98.7 L520.85 101.5 L521.10 104.9 L521.35 108.8 L521.60 113.2 L521.85 118.4 L522.10 125.0 L522.35 133.9 L522.60 149.2 L522.85 169.0 L523.10 182.8 L523.35 192.9 L523.60 202.4 L523.85 213.1 L524.10 221.7 L524.35 228.4 L524.60 234.2 L524.85 238.6 L525.10 241.1 L525.35 242.8 L525.60 244.2 L525.85 245.3 L526.10 246.2 L526.35 247.2 L526.60 248.3 L526.85 249.3 L527.10 250.2 L527.35 251.1 L527.60 252.0 L527.85 251.6 L528.10 250.6 L528.35 249.4 L528.60 248.1 L528.85 246.8 L529.10 245.4 L529.35 243.7 L529.60 241.3 L529.85 237.0 L530.10 228.1 L530.35 217.7 L530.60 204.4 L530.85 195.0 L531.10 188.1 L531.35 181.5 L531.60 174.4 L531.85 167.2 L532.10 157.4 L532.35 143.8 L532.60 134.4 L532.85 127.7 L533.10 122.2 L533.35 117.4 L533.60 113.1 L533.85 109.1 L534.10 105.4 L534.35 102.0 L534.60 99.0 L534.85 96.5 L535.10 94.4 L535.35 92.5 L535.60 91.2 L535.85 90.2 L536.10 89.4 L536.35 88.9 L536.60 88.9 L536.85 89.4 L537.10 90.1 L537.35 91.1 L537.60 92.3 L537.85 94.1 L538.10 96.2 L538.35 98.8 L538.60 101.9 L538.85 105.5 L539.10 109.7 L539.35 114.5 L539.60 120.3 L539.85 127.9 L540.10 138.3 L540.35 159.3 L540.60 175.6 L540.85 187.4 L541.10 196.9 L541.35 207.2 L541.60 217.4 L541.85 224.8 L542.10 231.2 L542.35 236.4 L542.60 239.9 L542.85 241.9 L543.10 243.4 L543.35 244.6 L543.60 245.7 L543.85 246.7 L544.10 247.7 L544.35 248.7 L544.60 249.7 L544.85 250.6 L545.10 251.5 L545.35 252.1 L545.60 251.1 L545.85 250.0 L546.10 248.8 L546.35 247.5 L546.60 246.2 L546.85 244.7 L547.10 242.8 L547.35 240.0 L547.60 233.3 L547.85 223.5 L548.10 211.7 L548.35 199.9 L548.60 192.2 L548.85 185.7 L549.10 178.8 L549.35 171.9 L549.60 164.0 L549.85 151.9 L550.10 139.7 L550.35 132.3 L550.60 126.3 L550.85 121.2 L551.10 116.8 L551.35 112.6 L551.60 108.8 L551.85 105.3 L552.10 102.1 L552.35 99.4 L552.60 97.1 L552.85 95.1 L553.10 93.5 L553.35 92.4 L553.60 91.5 L553.85 90.8 L554.10 90.5 L554.35 90.8 L554.60 91.4 L554.85 92.3 L555.10 93.3 L555.35 94.8 L555.60 96.7 L555.85 99.0 L556.10 101.8 L556.35 105.1 L556.60 108.9 L556.85 113.4 L557.10 118.5 L557.35 125.0 L557.60 133.7 L557.85 148.5 L558.10 168.6 L558.35 182.5 L558.60 192.7 L558.85 202.1 L559.10 212.8 L559.35 221.5 L559.60 228.2 L559.85 234.0 L560.10 238.5 L560.35 241.0 L560.60 242.8 L560.85 244.1 L561.10 245.2 L561.35 246.2 L561.60 247.2 L561.85 248.2 L562.10 249.2 L562.35 250.2 L562.60 251.1 L562.85 251.9 L563.10 251.6 L563.35 250.6 L563.60 249.4 L563.85 248.1 L564.10 246.9 L564.35 245.5 L564.60 243.8 L564.85 241.5 L565.10 237.4 L565.35 228.7 L565.60 218.4 L565.85 205.2 L566.10 195.8 L566.35 188.9 L566.60 182.3 L566.85 175.3 L567.10 168.1 L567.35 158.6 L567.60 145.2 L567.85 135.7 L568.10 129.0 L568.35 123.4 L568.60 118.7 L568.85 114.4 L569.10 110.4 L569.35 106.7 L569.60 103.3 L569.85 100.4 L570.10 97.8 L570.35 95.7 L570.60 93.9 L570.85 92.5 L571.10 91.6 L571.35 90.8 L571.60 90.2 L571.85 90.2 L572.10 90.6 L572.35 91.4 L572.60 92.3 L572.85 93.5 L573.10 95.3 L573.35 97.4 L573.60 99.9 L573.85 102.9 L574.10 106.5 L574.35 110.7 L574.60 115.4 L574.85 121.1 L575.10 128.5 L575.35 138.7 L575.60 159.2 L575.85 175.6 L576.10 187.5 L576.35 197.0 L576.60 207.1 L576.85 217.4 L577.10 224.7 L577.35 231.1 L577.60 236.3 L577.85 239.9 L578.10 241.9 L578.35 243.4 L578.60 244.7 L578.85 245.7 L579.10 246.7 L579.35 247.7 L579.60 248.7 L579.85 249.7 L580.10 250.6 L580.35 251.5 L580.60 252.1 L580.85 251.2 L581.10 250.1 L581.35 248.8 L581.60 247.5 L581.85 246.2 L582.10 244.8 L582.35 242.8 L582.60 240.1 L582.85 233.6 L583.10 223.8 L583.35 212.2 L583.60 200.1 L583.85 192.3 L584.10 185.8 L584.35 178.9 L584.60 172.0 L584.85 164.1 L585.10 152.2 L585.35 139.8 L585.60 132.3 L585.85 126.2 L586.10 121.1 L586.35 116.6 L586.60 112.5 L586.85 108.6 L587.10 105.0 L587.35 101.9 L587.60 99.1 L587.85 96.8 L588.10 94.8 L588.35 93.1 L588.60 92.1 L588.85 91.2 L589.10 90.5 L589.35 90.1 L589.60 90.3 L589.85 91.0 L590.10 91.8 L590.35 92.8 L590.60 94.3 L590.85 96.3 L591.10 98.5 L591.35 101.3 L591.60 104.6 L591.85 108.4 L592.10 112.9 L592.35 118.0 L592.60 124.4 L592.85 133.0 L593.10 147.4 L593.35 167.7 L593.60 181.8 L593.85 192.1 L594.10 201.6 L594.35 212.3 L594.60 221.2 L594.85 227.9 L595.10 233.8 L595.35 238.3 L595.60 240.9 L595.85 242.7 L596.10 244.1 L596.35 245.2 L596.60 246.2 L596.85 247.1 L597.10 248.2 L597.35 249.2 L597.60 250.1 L597.85 251.1 L598.10 251.9 L598.35 251.7 L598.60 250.6 L598.85 249.5 L599.10 248.2 L599.35 246.9 L599.60 245.5 L599.85 243.9 L600.10 241.6 L600.35 237.5 L600.60 228.9 L600.85 218.6 L601.10 205.4 L601.35 195.6 L601.60 188.6 L601.85 182.0 L602.10 175.0 L602.35 167.8 L602.60 158.4 L602.85 144.8 L603.10 135.0 L603.35 128.2 L603.60 122.6 L603.85 117.8 L604.10 113.5 L604.35 109.4 L604.60 105.7 L604.85 102.3 L605.10 99.3 L605.35 96.7 L605.60 94.5 L605.85 92.6 L606.10 91.3 L606.35 90.3 L606.60 89.5 L606.85 88.9 L607.10 88.9 L607.35 89.3 L607.60 90.1 L607.85 91.0 L608.10 92.2 L608.35 93.9 L608.60 96.1 L608.85 98.6 L609.10 101.6 L609.35 105.2 L609.60 109.3 L609.85 114.1 L610.10 119.8 L610.35 127.2 L610.60 137.3 L610.85 157.6 L611.10 174.4 L611.35 186.6 L611.60 196.2 L611.85 206.3 L612.10 216.7 L612.35 224.2 L612.60 230.7 L612.85 236.0 L613.10 239.7 L613.35 241.7 L613.60 243.3 L613.85 244.6 L614.10 245.6 L614.35 246.6 L614.60 247.6 L614.85 248.6 L615.10 249.6 L615.35 250.6 L615.60 251.5 L615.85 252.1 L616.10 251.2 L616.35 250.1 L616.60 248.8 L616.85 247.5 L617.10 246.2 L617.35 244.7 L617.60 242.8 L617.85 240.0 L618.10 233.7 L618.35 223.8 L618.60 212.1 L618.85 199.6 L619.10 191.5 L619.35 184.9 L619.60 177.9 L619.85 170.9 L620.10 163.0 L620.35 151.1 L620.60 138.2 L620.85 130.5 L621.10 124.2 L621.35 119.0 L621.60 114.4 L621.85 110.2 L622.10 106.3 L622.35 102.6 L622.60 99.4 L622.85 96.6 L623.10 94.2 L623.35 92.1 L623.60 90.4 L623.85 89.3 L624.10 88.4 L624.35 87.7 L624.60 87.3 L624.85 87.5 L625.10 88.1 L625.35 89.0 L625.60 90.0 L625.85 91.5 L626.10 93.5 L626.35 95.8 L626.60 98.6 L626.85 101.9 L627.10 105.8 L627.35 110.3 L627.60 115.4 L627.85 121.9 L628.10 130.6 L628.35 144.7 L628.60 165.6 L628.85 180.1 L629.10 190.7 L629.35 200.3 L629.60 211.1 L629.85 220.3 L630.10 227.2 L630.35 233.3 L630.60 237.9 L630.85 240.7 L631.10 242.5 L631.35 243.9 L631.60 245.0 L631.85 246.0 L632.10 247.0 L632.35 248.1 L632.60 249.1 L632.85 250.1 L633.10 251.0 L633.35 251.9 L633.60 252.7 L633.85 253.8 L634.10 255.0 L634.35 256.3 L634.60 257.7 L634.85 259.1 L635.10 260.8 L635.35 263.2 L635.60 267.2 L635.85 276.0 L636.10 286.6 L636.35 300.3 L636.60 310.7 L636.85 318.0 L637.10 324.8 L637.35 332.2 L637.60 339.6 L637.85 349.2 L638.10 363.2 L638.35 373.6 L638.60 380.8 L638.85 386.7 L639.10 391.7 L639.35 396.2 L639.60 400.4 L639.85 404.3 L640.10 407.9 L640.35 411.0 L640.60 413.7 L640.85 416.0 L641.10 417.9 L641.35 419.4 L641.60 420.4 L641.85 421.2 L642.10 421.8 L642.35 421.9 L642.60 421.5 L642.85 420.7 L643.10 419.7 L643.35 418.5 L643.60 416.7 L643.85 414.5 L644.10 412.0 L644.35 408.8 L644.60 405.1 L644.85 400.8 L645.10 395.9 L645.35 390.1 L645.60 382.4 L645.85 372.0 L646.10 351.4 L646.35 333.6 L646.60 320.8 L646.85 310.8 L647.10 300.3 L647.35 289.5 L647.60 281.5 L647.85 274.8 L648.10 269.2 L648.35 265.3 L648.60 263.1 L648.85 261.5 L649.10 260.2 L649.35 259.1 L649.60 258.1 L649.85 257.0 L650.10 255.9 L650.35 254.9 L650.60 253.9 L650.85 253.0 L651.10 256.5 L651.35 257.8 L651.60 259.2 L651.85 261.0 L652.10 263.4 L652.35 267.8 L652.60 276.8 L652.85 287.7 L653.10 301.5 L653.35 311.4 L653.60 318.7 L653.85 325.6 L654.10 332.9 L654.35 340.4 L654.60 350.4 L654.85 364.5 L655.10 374.5 L655.35 381.5 L655.60 387.3 L655.85 392.3 L656.10 396.8 L656.35 401.0 L656.60 404.9 L656.85 408.4 L657.10 411.5 L657.35 414.2 L657.60 416.4 L657.85 418.4 L658.10 419.7 L658.35 420.8 L658.60 421.6 L658.85 422.2 L659.10 422.2 L659.35 421.7 L659.60 420.9 L659.85 420.0 L660.10 418.7 L660.35 416.9 L660.60 414.6 L660.85 412.0 L661.10 408.8 L661.35 405.1 L661.60 400.7 L661.85 395.7 L662.10 389.8 L662.35 382.0 L662.60 371.3 L662.85 349.8 L663.10 332.6 L663.35 320.1 L663.60 310.1 L663.85 299.5 L664.10 288.8 L664.35 281.0 L664.60 274.3 L664.85 268.8 L665.10 265.1 L665.35 263.0 L665.60 261.4 L665.85 260.1 L666.10 259.0 L666.35 258.0 L666.60 257.0 L666.85 255.9 L667.10 254.8 L667.35 253.9 L667.60 252.9 L667.85 252.2 L668.10 252.2 L668.35 252.2 L668.60 252.2 L668.85 258.7 L669.10 260.3 L669.35 262.5 L669.60 265.7 L669.85 273.4 L670.10 283.9 L670.35 296.7 L670.60 308.3 L670.85 316.0 L671.10 322.7 L671.35 330.0 L671.60 337.2 L671.85 345.8 L672.10 359.2 L672.35 371.0 L672.60 378.4 L672.85 384.6 L673.10 389.7 L673.35 394.3 L673.60 398.5 L673.85 402.5 L674.10 406.1 L674.35 409.4 L674.60 412.1 L674.85 414.5 L675.10 416.5 L675.35 418.1 L675.60 419.2 L675.85 420.1 L676.10 420.7 L676.35 421.0 L676.60 420.6 L676.85 419.9 L677.10 419.0 L677.35 417.9 L677.60 416.2 L677.85 414.1 L678.10 411.7 L678.35 408.7 L678.60 405.2 L678.85 401.0 L679.10 396.3 L679.35 390.8 L679.60 383.7 L679.85 374.1 L680.10 356.6 L680.35 336.9 L680.60 323.1 L680.85 312.8 L681.10 302.7 L681.35 291.6 L681.60 283.1 L681.85 276.2 L682.10 270.3 L682.35 266.0 L682.60 263.5 L682.85 261.8 L683.10 260.4 L683.35 259.3 L683.60 258.3 L683.85 257.3 L684.10 256.2 L684.35 255.1 L684.60 254.1 L684.85 253.2 L685.10 252.3 L685.35 252.2 L685.60 252.2 L685.85 252.2 L686.10 252.2 L686.35 251.7 L686.60 251.3 L686.85 250.8 L687.10 250.4 L687.35 250.0 L687.60 249.5 L687.85 249.1 L688.10 248.8 L688.35 248.7 L688.60 248.6 L688.85 248.5 L689.10 248.4 L689.35 248.3 L689.60 248.2 L689.85 248.5 L690.10 248.8 L690.35 249.1 L690.60 249.4 L690.85 249.7 L691.10 250.0 L691.35 250.4 L691.60 250.7 L691.85 251.0 L692.10 251.3 L692.35 251.4 L692.60 251.5 L692.85 251.5 L693.10 251.5 L693.35 251.6 L693.60 251.6 L693.85 251.7 L694.10 251.7 L694.35 251.7 L694.60 251.8 L694.85 251.8 L695.10 251.9 L695.35 251.9 L695.60 251.9 L695.85 252.0 L696.10 252.0 L696.35 252.0 L696.60 252.0 L696.85 252.0 L697.10 252.0 L697.35 252.0 L697.60 252.0 L697.85 252.0 L698.10 252.0 L698.35 252.0 L698.60 252.0 L698.85 252.0 L699.10 252.0 L699.35 252.0 L699.60 252.0 L699.85 251.9 L700.10 251.7 L700.35 251.4 L700.60 251.2 L700.85 251.0 L701.10 250.8 L701.35 250.6 L701.60 250.4 L701.85 250.2 L702.10 250.0 L702.35 249.8 L702.60 250.1 L702.85 250.3 L703.10 250.6 L703.35 250.8 L703.60 251.1 L703.85 251.3 L704.10 251.6 L704.35 251.8 L704.60 252.1 L704.85 252.3 L705.10 252.5 L705.35 252.8 L705.60 253.0 L705.85 253.3 L706.10 253.5 L706.35 253.8 L706.60 254.0 L706.85 254.3 L707.10 254.5 L707.35 254.8 L707.60 255.0 L707.85 254.9 L708.10 254.5 L708.35 254.2 L708.60 253.9 L708.85 253.5 L709.10 253.2 L709.35 252.8 L709.60 252.5 L709.85 252.1 L710.10 251.8 L710.35 251.4 L710.60 251.1 L710.85 250.7 L711.10 250.4 L711.35 250.1 L711.60 249.7 L711.85 249.4 L712.10 249.0 L712.35 248.7 L712.60 248.7 L712.85 248.7 L713.10 248.8 L713.35 248.9 L713.60 248.9 L713.85 249.0 L714.10 249.1 L714.35 249.1 L714.60 249.2 L714.85 249.3 L715.10 249.4 L715.35 249.4 L715.60 249.5 L715.85 249.6 L716.10 249.6 L716.35 249.7 L716.60 249.8 L716.85 249.9 L717.10 250.2 L717.35 250.4 L717.60 250.6 L717.85 250.9 L718.10 251.1 L718.35 251.3 L718.60 251.5 L718.85 251.8 L719.10 252.0 L719.35 252.2 L719.60 252.5 L719.85 252.7 L720.10 252.9 L720.35 253.2 L720.60 253.2 L720.85 253.1 L721.10 253.1 L721.35 253.1 L721.60 253.0 L721.85 253.0 L722.10 253.0 L722.35 252.9 L722.60 252.9 L722.85 252.9 L723.10 252.8 L723.35 252.8 L723.60 252.8 L723.85 252.7 L724.10 252.7 L724.35 252.7 L724.60 252.6 L724.85 252.6 L725.10 252.6 L725.35 252.5 L725.60 252.5 L725.85 252.4 L726.10 252.4 L726.35 252.3 L726.60 252.2 L726.85 252.1 L727.10 252.0 L727.35 251.9 L727.60 251.8 L727.85 251.8 L728.10 251.7 L728.35 251.6 L728.60 251.5 L728.85 251.4 L729.10 251.4 L729.35 251.4 L729.60 251.4 L729.85 251.4 L730.10 251.4 L730.35 251.4 L730.60 251.4 L730.85 251.4 L731.10 251.4 L731.35 251.4 L731.60 251.4 L731.85 251.4 L732.10 251.4 L732.35 251.4 L732.60 251.4 L732.85 251.4 L733.10 251.4 L733.35 251.4 L733.60 251.5 L733.85 251.6 L734.10 251.7 L734.35 251.7 L734.60 251.8 L734.85 251.9 L735.10 251.9 L735.35 252.0 L735.60 252.2 L735.85 252.3 L736.10 252.4 L736.35 252.5 L736.60 252.7 L736.85 252.8 L737.10 252.9 L737.35 253.1 L737.60 253.2 L737.85 253.3 L738.10 253.4 L738.35 253.6 L738.60 253.7 L738.85 253.8 L739.10 253.8 L739.35 253.7 L739.60 253.6 L739.85 253.4 L740.10 253.3 L740.35 253.1 L740.60 253.0 L740.85 252.8 L741.10 252.7 L741.35 252.5 L741.60 252.4 L741.85 252.2 L742.10 252.1 L742.35 252.0 L742.60 251.8 L742.85 251.7 L743.10 251.7 L743.35 251.7 L743.60 251.7 L743.85 251.7 L744.10 251.7 L744.35 251.7 L744.60 251.7 L744.85 251.7 L745.10 251.7 L745.35 251.7 L745.60 251.7 L745.85 251.7 L746.10 251.6 L746.35 251.4 L746.60 251.3 L746.85 251.1 L747.10 250.9 L747.35 250.7 L747.60 250.5 L747.85 250.3 L748.10 250.2 L748.35 250.0 L748.60 249.8 L748.85 249.9 L749.10 250.0 L749.35 250.1 L749.60 250.2 L749.85 250.3 L750.10 250.4 L750.35 250.6 L750.60 250.7 L750.85 250.8 L751.10 250.9 L751.35 251.0 L751.60 251.1 L751.85 251.2 L752.10 251.3 L752.35 251.4 L752.60 251.5 L752.85 251.5 L753.10 251.6 L753.35 251.6 L753.60 251.7 L753.85 251.7 L754.10 251.8 L754.35 251.8 L754.60 251.9 L754.85 252.0 L755.10 252.0 L755.35 252.1 L755.60 252.1 L755.85 252.2 L756.10 252.2 L756.35 252.1 L756.60 252.1 L756.85 252.1 L757.10 252.0 L757.35 252.0 L757.60 251.9 L757.85 251.9 L758.10 251.9 L758.35 251.8 L758.60 251.8 L758.85 251.7 L759.10 251.7 L759.35 251.7 L759.60 251.6 L759.85 251.6 L760.10 251.5 L760.35 251.5 L760.60 251.4 L760.85 251.4 L761.10 251.3 L761.35 251.1 L761.60 251.0 L761.85 250.8 L762.10 250.7 L762.35 250.6 L762.60 250.4 L762.85 250.3 L763.10 250.1 L763.35 250.0 L763.60 249.8 L763.85 249.7 L764.10 249.7 L764.35 250.1 L764.60 250.4 L764.85 250.7 L765.10 251.1 L765.35 251.4 L765.60 251.4 L765.85 250.4 L766.10 249.1 L766.35 247.8 L766.60 246.5 L766.85 245.1 L767.10 243.3 L767.35 240.8 L767.60 235.7 L767.85 226.3 L768.10 215.4 L768.35 202.1 L768.60 193.3 L768.85 186.5 L769.10 179.7 L769.35 172.7 L769.60 165.2 L769.85 154.5 L770.10 140.9 L770.35 132.3 L770.60 125.8 L770.85 120.3 L771.10 115.6 L771.35 111.4 L771.60 107.4 L771.85 103.7 L772.10 100.3 L772.35 97.4 L772.60 94.9 L772.85 92.8 L773.10 91.0 L773.35 89.8 L773.60 88.8 L773.85 88.0 L774.10 87.6 L774.35 87.6 L774.60 88.2 L774.85 89.0 L775.10 90.0 L775.35 91.3 L775.60 93.2 L775.85 95.4 L776.10 98.0 L776.35 101.2 L776.60 105.0 L776.85 109.3 L777.10 114.3 L777.35 120.3 L777.60 128.4 L777.85 139.9 L778.10 161.6 L778.35 177.2 L778.60 188.5 L778.85 198.0 L779.10 208.6 L779.35 218.5 L779.60 225.7 L779.85 231.9 L780.10 237.0 L780.35 240.2 L780.60 242.1 L780.85 243.6 L781.10 244.8 L781.35 245.8 L781.60 246.8 L781.85 247.8 L782.10 248.9 L782.35 249.8 L782.60 250.8 L782.85 251.7 L783.10 251.9 L783.35 250.9 L783.60 249.8 L783.85 248.5 L784.10 247.2 L784.35 245.9 L784.60 244.4 L784.85 242.3 L785.10 239.1 L785.35 231.6 L785.60 221.5 L785.85 209.1 L786.10 197.8 L786.35 190.4 L786.60 183.8 L786.85 176.8 L787.10 169.8 L787.35 161.4 L787.60 148.5 L787.85 137.0 L788.10 129.9 L788.35 123.9 L788.60 118.9 L788.85 114.5 L789.10 110.4 L789.35 106.5 L789.60 103.0 L789.85 99.9 L790.10 97.2 L790.35 94.9 L790.60 92.9 L790.85 91.4 L791.10 90.4 L791.35 89.5 L791.60 88.9 L791.85 88.6 L792.10 88.9 L792.35 89.6 L792.60 90.5 L792.85 91.6 L793.10 93.2 L793.35 95.2 L793.60 97.6 L793.85 100.5 L794.10 103.9 L794.35 107.9 L794.60 112.5 L794.85 117.9 L795.10 124.7 L795.35 134.0 L795.60 151.0 L795.85 170.1 L796.10 183.5 L796.35 193.5 L796.60 203.2 L796.85 214.0 L797.10 222.3 L797.35 229.0 L797.60 234.7 L797.85 238.8 L798.10 241.2 L798.35 242.9 L798.60 244.2 L798.85 245.3 L799.10 246.3 L799.35 247.3 L799.60 248.3 L799.85 249.4 L800.10 250.3 L800.35 251.2 L800.60 252.1 L800.85 251.5 L801.10 250.4 L801.35 249.2 L801.60 247.8 L801.85 246.5 L802.10 245.1 L802.35 243.3 L802.60 240.8 L802.85 235.8 L803.10 226.4 L803.35 215.5 L803.60 202.0 L803.85 193.0 L804.10 186.0 L804.35 179.2 L804.60 172.1 L804.85 164.5 L805.10 153.9 L805.35 140.1 L805.60 131.2 L805.85 124.6 L806.10 119.0 L806.35 114.3 L806.60 109.9 L806.85 105.8 L807.10 102.1 L807.35 98.7 L807.60 95.7 L807.85 93.2 L808.10 91.0 L808.35 89.2 L808.60 87.9 L808.85 87.0 L809.10 86.2 L809.35 85.7 L809.60 85.7 L809.85 86.3 L810.10 87.1 L810.35 88.1 L810.60 89.4 L810.85 91.2 L811.10 93.5 L811.35 96.1 L811.60 99.3 L811.85 103.1 L812.10 107.5 L812.35 112.5 L812.60 118.5 L812.85 126.6 L813.10 137.9 L813.35 159.8 L813.60 175.8 L813.85 187.3 L814.10 197.0 L814.35 207.6 L814.60 217.8 L814.85 225.1 L815.10 231.5 L815.35 236.6 L815.60 239.9 L815.85 241.9 L816.10 243.4 L816.35 244.6 L816.60 245.7 L816.85 246.7 L817.10 247.7 L817.35 248.8 L817.60 249.8 L817.85 250.7 L818.10 251.6 L818.35 252.5 L818.60 253.5 L818.85 254.7 L819.10 256.0 L819.35 257.4 L819.60 258.8 L819.85 260.4 L820.10 262.6 L820.35 265.8 L820.60 273.6 L820.85 284.2 L821.10 297.3 L821.35 309.4 L821.60 317.4 L821.85 324.3 L822.10 331.7 L822.35 339.1 L822.60 347.9 L822.85 361.4 L823.10 373.8 L823.35 381.4 L823.60 387.8 L823.85 393.1 L824.10 397.8 L824.35 402.2 L824.60 406.3 L824.85 410.0 L825.10 413.3 L825.35 416.2 L825.60 418.6 L825.85 420.7 L826.10 422.4 L826.35 423.5 L826.60 424.4 L826.85 425.1 L827.10 425.4 L827.35 425.1 L827.60 424.3 L827.85 423.4 L828.10 422.3 L828.35 420.6 L828.60 418.5 L828.85 416.0 L829.10 412.9 L829.35 409.3 L829.60 405.1 L829.85 400.3 L830.10 394.6 L830.35 387.5 L830.60 377.8 L830.85 360.3 L831.10 339.7 L831.35 325.4 L831.60 314.8 L831.85 304.5 L832.10 293.1 L832.35 284.2 L832.60 277.1 L832.85 271.0 L833.10 266.5 L833.35 263.9 L833.60 262.1 L833.85 260.7 L834.10 259.5 L834.35 258.5 L834.60 257.4 L834.85 256.3 L835.10 255.3 L835.35 254.2 L835.60 253.3 L835.85 252.4 L836.10 251.5 L836.35 250.5 L836.60 249.3 L836.85 247.9 L837.10 246.7 L837.35 245.3 L837.60 243.5 L837.85 241.1 L838.10 236.4 L838.35 227.3 L838.60 216.6 L838.85 203.3 L839.10 194.3 L839.35 187.5 L839.60 180.8 L839.85 173.8 L840.10 166.4 L840.35 156.2 L840.60 142.7 L840.85 133.7 L841.10 127.1 L841.35 121.6 L841.60 116.9 L841.85 112.6 L842.10 108.6 L842.35 104.9 L842.60 101.6 L842.85 98.6 L843.10 96.1 L843.35 94.0 L843.60 92.2 L843.85 90.9 L844.10 90.0 L844.35 89.2 L844.60 88.7 L844.85 88.7 L845.10 89.2 L845.35 90.0 L845.60 91.0 L845.85 92.2 L846.10 94.1 L846.35 96.2 L846.60 98.8 L846.85 101.9 L847.10 105.6 L847.35 109.9 L847.60 114.8 L847.85 120.7 L848.10 128.5 L848.35 139.3 L848.60 160.8 L848.85 176.6 L849.10 188.1 L849.35 197.6 L849.60 208.0 L849.85 218.1 L850.10 225.3 L850.35 231.6 L850.60 236.7 L850.85 240.1 L851.10 242.0 L851.35 243.5 L851.60 244.7 L851.85 245.8 L852.10 246.7 L852.35 247.7 L852.60 248.8 L852.85 249.8 L853.10 250.7 L853.35 251.6 L853.60 252.4 L853.85 253.4 L854.10 254.5 L854.35 255.8 L854.60 257.1 L854.85 258.5 L855.10 260.0 L855.35 262.1 L855.60 265.1 L855.85 272.3 L856.10 282.4 L856.35 294.8 L856.60 306.6 L856.85 314.3 L857.10 320.9 L857.35 328.0 L857.60 335.1 L857.85 343.3 L858.10 356.1 L858.35 368.2 L858.60 375.6 L858.85 381.7 L859.10 386.8 L859.35 391.3 L859.60 395.5 L859.85 399.5 L860.10 403.0 L860.35 406.2 L860.60 409.0 L860.85 411.3 L861.10 413.4 L861.35 415.0 L861.60 416.0 L861.85 416.9 L862.10 417.6 L862.35 417.9 L862.60 417.6 L862.85 416.9 L863.10 416.0 L863.35 415.0 L863.60 413.4 L863.85 411.3 L864.10 409.0 L864.35 406.1 L864.60 402.7 L864.85 398.7 L865.10 394.0 L865.35 388.7 L865.60 381.9 L865.85 372.8 L866.10 356.6 L866.35 336.6 L866.60 322.7 L866.85 312.4 L867.10 302.6 L867.35 291.8 L867.60 283.1 L867.85 276.3 L868.10 270.4 L868.35 266.0 L868.60 263.5 L868.85 261.7 L869.10 260.4 L869.35 259.3 L869.60 258.3 L869.85 257.3 L870.10 256.2 L870.35 255.2 L870.60 254.2 L870.85 253.3 L871.10 252.4 L871.35 251.5 L871.60 250.5 L871.85 249.3 L872.10 248.0 L872.35 246.7 L872.60 245.3 L872.85 243.6 L873.10 241.2 L873.35 236.7 L873.60 227.7 L873.85 217.1 L874.10 203.8 L874.35 194.6 L874.60 187.7 L874.85 181.1 L875.10 174.1 L875.35 166.7 L875.60 156.8 L875.85 143.1 L876.10 134.0 L876.35 127.4 L876.60 121.8 L876.85 117.1 L877.10 112.8 L877.35 108.8 L877.60 105.1 L877.85 101.7 L878.10 98.8 L878.35 96.2 L878.60 94.1 L878.85 92.3 L879.10 91.0 L879.35 90.0 L879.60 89.2 L879.85 88.7 L880.10 88.7 L880.35 89.2 L880.60 90.0 L880.85 90.9 L881.10 92.2 L881.35 94.0 L881.60 96.1 L881.85 98.7 L882.10 101.8 L882.35 105.5 L882.60 109.7 L882.85 114.6 L883.10 120.4 L883.35 128.1 L883.60 138.7 L883.85 160.0 L884.10 176.0 L884.35 187.7 L884.60 197.2 L884.85 207.6 L885.10 217.8 L885.35 225.0 L885.60 231.4 L885.85 236.5 L886.10 240.0 L886.35 241.9 L886.60 243.5 L886.85 244.7 L887.10 245.7 L887.35 246.7 L887.60 247.7 L887.85 248.8 L888.10 249.7 L888.35 250.7 L888.60 251.6 L888.85 252.4 L889.10 253.4 L889.35 254.5 L889.60 255.8 L889.85 257.1 L890.10 258.4 L890.35 260.0 L890.60 262.0 L890.85 265.0 L891.10 272.0 L891.35 282.2 L891.60 294.5 L891.85 306.5 L892.10 314.4 L892.35 321.0 L892.60 328.2 L892.85 335.3 L893.10 343.5 L893.35 356.2 L893.60 368.6 L893.85 376.1 L894.10 382.2 L894.35 387.4 L894.60 392.0 L894.85 396.2 L895.10 400.2 L895.35 403.8 L895.60 407.0 L895.85 409.8 L896.10 412.2 L896.35 414.3 L896.60 415.9 L896.85 417.0 L897.10 417.9 L897.35 418.6 L897.60 418.9 L897.85 418.6 L898.10 417.9 L898.35 417.0 L898.60 416.0 L898.85 414.4 L899.10 412.4 L899.35 410.0 L899.60 407.1 L899.85 403.7 L900.10 399.7 L900.35 395.1 L900.60 389.8 L900.85 383.0 L901.10 373.9 L901.35 358.1 L901.60 337.8 L901.85 323.6 L902.10 313.2 L902.35 303.4 L902.60 292.4 L902.85 283.6 L903.10 276.7 L903.35 270.7 L903.60 266.2 L903.85 263.6 L904.10 261.9 L904.35 260.5 L904.60 259.3 L904.85 258.3 L905.10 257.3 L905.35 256.3 L905.60 255.2 L905.85 254.2 L906.10 253.3 L906.35 252.4 L906.60 251.6 L906.85 250.5 L907.10 249.3 L907.35 248.0 L907.60 246.7 L907.85 245.3 L908.10 243.6 L908.35 241.2 L908.60 236.8 L908.85 227.9 L909.10 217.3 L909.35 203.9 L909.60 194.4 L909.85 187.4 L910.10 180.7 L910.35 173.6 L910.60 166.3 L910.85 156.4 L911.10 142.7 L911.35 133.2 L911.60 126.5 L911.85 120.8 L912.10 116.0 L912.35 111.7 L912.60 107.6 L912.85 103.9 L913.10 100.5 L913.35 97.5 L913.60 94.9 L913.85 92.7 L914.10 90.9 L914.35 89.5 L914.60 88.6 L914.85 87.7 L915.10 87.2 L915.35 87.2 L915.60 87.7 L915.85 88.5 L916.10 89.4 L916.35 90.7 L916.60 92.4 L916.85 94.6 L917.10 97.2 L917.35 100.3 L917.60 104.0 L917.85 108.2 L918.10 113.1 L918.35 118.9 L918.60 126.6 L918.85 137.1 L919.10 158.3 L919.35 174.8 L919.60 186.7 L919.85 196.3 L920.10 206.7 L920.35 217.1 L920.60 224.5 L920.85 231.0 L921.10 236.2 L921.35 239.8 L921.60 241.8 L921.85 243.3 L922.10 244.6 L922.35 245.6 L922.60 246.6 L922.85 247.6 L923.10 248.7 L923.35 249.7 L923.60 250.6 L923.85 251.5 L924.10 252.1 L924.35 251.1 L924.60 250.0 L924.85 248.8 L925.10 247.4 L925.35 246.2 L925.60 244.7 L925.85 242.7 L926.10 239.9 L926.35 233.2 L926.60 223.3 L926.85 211.4 L927.10 199.4 L927.35 191.6 L927.60 185.1 L927.85 178.2 L928.10 171.2 L928.35 163.2 L928.60 151.1 L928.85 138.7 L929.10 131.3 L929.35 125.2 L929.60 120.1 L929.85 115.6 L930.10 111.4 L930.35 107.6 L930.60 104.0 L930.85 100.8 L931.10 98.1 L931.35 95.7 L931.60 93.7 L931.85 92.1 L932.10 91.0 L932.35 90.1" fill="none" stroke-width="1.15" stroke-linejoin="round"/></defs>
<clipPath id="cblk"><rect x="52" y="29" width="72" height="448"/><rect x="688" y="29" width="79.5" height="448"/><rect x="124" y="425" width="564" height="8"/><rect x="767.5" y="425" width="166" height="8"/><rect x="124" y="29" width="564" height="43"/><rect x="767.5" y="29" width="166" height="43"/></clipPath>
<use href="#wv" stroke="#e4e41e" clip-path="url(#cblk)"/>
<clipPath id="cred"><rect x="124" y="72" width="141" height="78"/><rect x="124" y="352" width="141" height="73"/><rect x="767.5" y="72" width="141.5" height="78"/><rect x="767.5" y="352" width="141.5" height="73"/></clipPath>
<use href="#wv" stroke="#e3c42e" clip-path="url(#cred)"/>
<clipPath id="colv"><rect x="124" y="150" width="141" height="202"/><rect x="767.5" y="150" width="141.5" height="202"/></clipPath>
<use href="#wv" stroke="#e8e236" clip-path="url(#colv)"/>
<clipPath id="csdi"><rect x="265" y="72" width="35.4" height="353"/><rect x="909" y="72" width="24" height="353"/></clipPath>
<use href="#wv" stroke="#dcdc30" clip-path="url(#csdi)"/>
<clipPath id="ctea"><rect x="300.4" y="72" width="335.2" height="353"/></clipPath>
<use href="#wv" stroke="#c6da72" clip-path="url(#ctea)"/>
<clipPath id="cgrn"><rect x="635.6" y="72" width="34.6" height="353"/></clipPath>
<use href="#wv" stroke="#dee23c" clip-path="url(#cgrn)"/>
<clipPath id="cblu"><rect x="670.2" y="72" width="17.8" height="353"/></clipPath>
<use href="#wv" stroke="#e8d67a" clip-path="url(#cblu)"/>
</g>
<line x1="52.6" y1="231.2" x2="932.5" y2="231.2" stroke="#7878d4" stroke-width="1.15" stroke-dasharray="2.7 3.15"/>
<line x1="52.6" y1="275" x2="932.5" y2="275" stroke="#7878d4" stroke-width="1.15" stroke-dasharray="2.7 3.15"/>
<text transform="translate(406 68.5) scale(0.84 1)" font-size="9.5" fill="#fff" text-anchor="middle">353</text>
<text transform="translate(194.5 79.9) scale(0.84 1)" font-size="9.5" fill="#fff" text-anchor="middle">Label = 353</text>
<text transform="translate(283 79.9) scale(0.84 1)" font-size="9.5" fill="#fff" text-anchor="middle">SDI = 3</text>
<text transform="translate(468.3 79.9) scale(0.84 1)" font-size="9.5" fill="#fff" text-anchor="middle">Data = 524287</text>
<text transform="translate(653 79.9) scale(0.84 1)" font-size="9.5" fill="#fff" text-anchor="middle">Fail(0)</text>
<text transform="translate(679.5 79.9) scale(0.84 1)" font-size="9.5" fill="#fff" text-anchor="middle">00</text>
<text transform="translate(850 68.5) scale(0.84 1)" font-size="9.5" fill="#fff" text-anchor="middle">352</text>
<text transform="translate(838.5 79.9) scale(0.84 1)" font-size="9.5" fill="#fff" text-anchor="middle">Label = 352</text>
<text transform="translate(920.5 79.9) scale(0.84 1)" font-size="9.5" fill="#fff" text-anchor="middle">3</text>
<text transform="translate(126.5 158.2) scale(0.84 1)" font-size="9.5" fill="#fff" text-anchor="start">Raw = 3</text>
<text transform="translate(171 158.2) scale(0.84 1)" font-size="9.5" fill="#fff" text-anchor="start">Raw = 5</text>
<text transform="translate(224 158.2) scale(0.84 1)" font-size="9.5" fill="#fff" text-anchor="start">Raw = 3</text>
<text transform="translate(770.5 158.2) scale(0.84 1)" font-size="9.5" fill="#fff" text-anchor="start">Raw = 3</text>
<text transform="translate(815 158.2) scale(0.84 1)" font-size="9.5" fill="#fff" text-anchor="start">Raw = 5</text>
<text transform="translate(867.5 158.2) scale(0.84 1)" font-size="9.5" fill="#fff" text-anchor="start">Raw = 2</text>
<line x1="51.7" y1="28" x2="51.7" y2="477.5" stroke="#525252" stroke-width="1.4" />
<line x1="932.5" y1="28" x2="932.5" y2="477.5" stroke="#525252" stroke-width="1.3" />
<line x1="51.6" y1="28.6" x2="932.5" y2="28.6" stroke="#525252" stroke-width="1.2" />
<line x1="51.6" y1="477.4" x2="932.5" y2="477.4" stroke="#545454" stroke-width="1.2" />
<text transform="translate(48.8 37.9) scale(0.935 1)" font-size="9.5" fill="#e2e21e" stroke="#e2e21e" stroke-width="0.3" text-anchor="end">13.82 V</text>
<text transform="translate(48.8 88.34) scale(0.935 1)" font-size="9.5" fill="#e2e21e" stroke="#e2e21e" stroke-width="0.3" text-anchor="end">10.37 V</text>
<text transform="translate(48.8 144.58) scale(0.935 1)" font-size="9.5" fill="#e2e21e" stroke="#e2e21e" stroke-width="0.3" text-anchor="end">6.92 V</text>
<text transform="translate(48.8 200.82) scale(0.935 1)" font-size="9.5" fill="#e2e21e" stroke="#e2e21e" stroke-width="0.3" text-anchor="end">3.47 V</text>
<text transform="translate(48.8 256.5) scale(0.935 1)" font-size="9.5" fill="#e2e21e" stroke="#e2e21e" stroke-width="0.3" text-anchor="end">20 mV</text>
<text transform="translate(48.8 313.3) scale(0.935 1)" font-size="9.5" fill="#e2e21e" stroke="#e2e21e" stroke-width="0.3" text-anchor="end">-3.43 V</text>
<text transform="translate(48.8 369.54) scale(0.935 1)" font-size="9.5" fill="#e2e21e" stroke="#e2e21e" stroke-width="0.3" text-anchor="end">-6.88 V</text>
<text transform="translate(48.8 425.78) scale(0.935 1)" font-size="9.5" fill="#e2e21e" stroke="#e2e21e" stroke-width="0.3" text-anchor="end">-10.33 V</text>
<text transform="translate(48.8 476.2) scale(0.935 1)" font-size="9.5" fill="#e2e21e" stroke="#e2e21e" stroke-width="0.3" text-anchor="end">-13.78 V</text>
<rect x="40.5" y="243.5" width="11" height="7.6" rx="1" fill="#f0f01a"/>
<text x="46" y="250" font-size="6.5" fill="#000" stroke="#000" stroke-width="0.3" text-anchor="middle" >Z1</text>
<text transform="translate(51.5 488) scale(0.935 1)" font-size="9.5" fill="#e2e21e" stroke="#e2e21e" stroke-width="0.3" text-anchor="start">Δ250 µs</text>
<text transform="translate(139.89 488) scale(0.935 1)" font-size="9.5" fill="#e2e21e" stroke="#e2e21e" stroke-width="0.3" text-anchor="middle">Δ200 µs</text>
<text transform="translate(227.98 488) scale(0.935 1)" font-size="9.5" fill="#e2e21e" stroke="#e2e21e" stroke-width="0.3" text-anchor="middle">Δ150 µs</text>
<text transform="translate(316.07 488) scale(0.935 1)" font-size="9.5" fill="#e2e21e" stroke="#e2e21e" stroke-width="0.3" text-anchor="middle">Δ100 µs</text>
<text transform="translate(404.16 488) scale(0.935 1)" font-size="9.5" fill="#e2e21e" stroke="#e2e21e" stroke-width="0.3" text-anchor="middle">Δ50 µs</text>
<text transform="translate(580.34 488) scale(0.935 1)" font-size="9.5" fill="#e2e21e" stroke="#e2e21e" stroke-width="0.3" text-anchor="middle">Δ50 µs</text>
<text transform="translate(668.43 488) scale(0.935 1)" font-size="9.5" fill="#e2e21e" stroke="#e2e21e" stroke-width="0.3" text-anchor="middle">Δ100 µs</text>
<text transform="translate(756.52 488) scale(0.935 1)" font-size="9.5" fill="#e2e21e" stroke="#e2e21e" stroke-width="0.3" text-anchor="middle">Δ150 µs</text>
<text transform="translate(844.61 488) scale(0.935 1)" font-size="9.5" fill="#e2e21e" stroke="#e2e21e" stroke-width="0.3" text-anchor="middle">Δ200 µs</text>
<text transform="translate(932.8 488) scale(0.935 1)" font-size="9.5" fill="#e2e21e" stroke="#e2e21e" stroke-width="0.3" text-anchor="end">Δ250 µs</text>
<path d="M46.6 481 l3 -2.6 v1.9 h2.2 v1.4 h-2.2 v1.9 z" fill="#e2e21e"/>
<rect x="463.4" y="466.5" width="51.3" height="9.5" rx="2" fill="#f4f410"/>
<text x="489.2" y="474.7" font-size="9.3" fill="#2a2a00" text-anchor="middle" >41.5991 ms</text>
<line x1="0" y1="500" x2="883" y2="500" stroke="#464646" stroke-width="1" />
<rect x="2.8" y="500.4" width="21.5" height="10.9" fill="#fafa05" />
<text x="4" y="509.6" font-size="10" fill="#000" text-anchor="start" font-weight="bold" >A...</text>
<text x="26" y="509.6" font-size="10" fill="#fff" text-anchor="start" font-weight="bold" textLength="21.5" lengthAdjust="spacingAndGlyphs" >Time</text>
<text x="69.5" y="509.6" font-size="10" fill="#fff" text-anchor="start" font-weight="bold" textLength="6.5" lengthAdjust="spacingAndGlyphs" >O</text>
<text x="80.5" y="509.6" font-size="10" fill="#fff" text-anchor="start" font-weight="bold" textLength="24" lengthAdjust="spacingAndGlyphs" >Label</text>
<text x="111" y="509.6" font-size="10" fill="#fff" text-anchor="start" font-weight="bold" textLength="15" lengthAdjust="spacingAndGlyphs" >SDI</text>
<text x="134" y="509.6" font-size="10" fill="#fff" text-anchor="start" font-weight="bold" textLength="18.5" lengthAdjust="spacingAndGlyphs" >Data</text>
<text x="259.3" y="509.6" font-size="10" fill="#fff" text-anchor="start" font-weight="bold" textLength="20.2" lengthAdjust="spacingAndGlyphs" >SSM</text>
<text x="282.5" y="509.6" font-size="10" fill="#fff" text-anchor="start" font-weight="bold" textLength="11.3" lengthAdjust="spacingAndGlyphs" >Pa</text>
<text x="296.8" y="509.6" font-size="10" fill="#fff" text-anchor="start" font-weight="bold" textLength="18.2" lengthAdjust="spacingAndGlyphs" >Msg</text>
<text x="812.5" y="509.6" font-size="10" fill="#fff" text-anchor="start" font-weight="bold" textLength="27.5" lengthAdjust="spacingAndGlyphs" >Status</text>
<line x1="24.5" y1="501" x2="24.5" y2="512" stroke="#3a3a3a" stroke-width="1" />
<line x1="68.5" y1="501" x2="68.5" y2="512" stroke="#3a3a3a" stroke-width="1" />
<line x1="78.5" y1="501" x2="78.5" y2="512" stroke="#3a3a3a" stroke-width="1" />
<line x1="109.5" y1="501" x2="109.5" y2="512" stroke="#3a3a3a" stroke-width="1" />
<line x1="131.5" y1="501" x2="131.5" y2="512" stroke="#3a3a3a" stroke-width="1" />
<line x1="257.5" y1="501" x2="257.5" y2="512" stroke="#3a3a3a" stroke-width="1" />
<line x1="281.5" y1="501" x2="281.5" y2="512" stroke="#3a3a3a" stroke-width="1" />
<line x1="295.5" y1="501" x2="295.5" y2="512" stroke="#3a3a3a" stroke-width="1" />
<line x1="810.5" y1="501" x2="810.5" y2="512" stroke="#3a3a3a" stroke-width="1" />
<clipPath id="hc"><rect x="0" y="500" width="883" height="12"/></clipPath>
<rect x="3" y="511.6" width="880" height="11.9" fill="#a9a800" />
<rect x="3" y="523.5" width="880" height="11.7" fill="#333000" />
<line x1="3" y1="511.8" x2="883" y2="511.8" stroke="#8a8a20" stroke-width="1" stroke-dasharray="2 1"/>
<line x1="3" y1="523.5" x2="883" y2="523.5" stroke="#6c6c10" stroke-width="1" stroke-dasharray="2 1"/>
<text transform="translate(3.8 521.6) scale(0.945 1)" font-size="9.7" fill="#f2f2b4" stroke="#f2f2b4" stroke-width="0.3" text-anchor="start">265</text>
<text transform="translate(25.5 521.6) scale(0.945 1)" font-size="9.7" fill="#f2f2b4" stroke="#f2f2b4" stroke-width="0.3" text-anchor="start">41.4 ms</text>
<text transform="translate(70 521.6) scale(0.945 1)" font-size="9.7" fill="#f2f2b4" stroke="#f2f2b4" stroke-width="0.3" text-anchor="start">3</text>
<text transform="translate(80.5 521.6) scale(0.945 1)" font-size="9.7" fill="#f2f2b4" stroke="#f2f2b4" stroke-width="0.3" text-anchor="start">353</text>
<text transform="translate(110.8 521.6) scale(0.945 1)" font-size="9.7" fill="#f2f2b4" stroke="#f2f2b4" stroke-width="0.3" text-anchor="start">3</text>
<text transform="translate(133.8 521.6) scale(0.945 1)" font-size="9.7" fill="#f2f2b4" stroke="#f2f2b4" stroke-width="0.3" text-anchor="start">524287.0000</text>
<text transform="translate(259.3 521.6) scale(0.945 1)" font-size="9.7" fill="#f2f2b4" stroke="#f2f2b4" stroke-width="0.3" text-anchor="start">0</text>
<text transform="translate(282.5 521.6) scale(0.945 1)" font-size="9.7" fill="#f2f2b4" stroke="#f2f2b4" stroke-width="0.3" text-anchor="start">0</text>
<text transform="translate(296.8 521.6) scale(0.945 1)" font-size="9.7" fill="#f2f2b4" stroke="#f2f2b4" stroke-width="0.3" text-anchor="start">353</text>
<text transform="translate(3.8 533.1) scale(0.945 1)" font-size="9.7" fill="#f6f6f6" stroke="#f6f6f6" stroke-width="0.3" text-anchor="start">266</text>
<text transform="translate(25.5 533.1) scale(0.945 1)" font-size="9.7" fill="#f6f6f6" stroke="#f6f6f6" stroke-width="0.3" text-anchor="start">41.8 ms</text>
<text transform="translate(70 533.1) scale(0.945 1)" font-size="9.7" fill="#f6f6f6" stroke="#f6f6f6" stroke-width="0.3" text-anchor="start">3</text>
<text transform="translate(80.5 533.1) scale(0.945 1)" font-size="9.7" fill="#f6f6f6" stroke="#f6f6f6" stroke-width="0.3" text-anchor="start">352</text>
<text transform="translate(110.8 533.1) scale(0.945 1)" font-size="9.7" fill="#f6f6f6" stroke="#f6f6f6" stroke-width="0.3" text-anchor="start">3</text>
<text transform="translate(133.8 533.1) scale(0.945 1)" font-size="9.7" fill="#f6f6f6" stroke="#f6f6f6" stroke-width="0.3" text-anchor="start">524287.0000</text>
<text transform="translate(259.3 533.1) scale(0.945 1)" font-size="9.7" fill="#f6f6f6" stroke="#f6f6f6" stroke-width="0.3" text-anchor="start">0</text>
<text transform="translate(283.5 533.1) scale(0.945 1)" font-size="9.7" fill="#f6f6f6" stroke="#f6f6f6" stroke-width="0.3" text-anchor="start">1</text>
<text transform="translate(296.8 533.1) scale(0.945 1)" font-size="9.7" fill="#f6f6f6" stroke="#f6f6f6" stroke-width="0.3" text-anchor="start">352</text>
<rect x="884" y="500" width="24" height="36.2" fill="#2c2c2c" />
<rect x="884.8" y="500.8" width="22.4" height="21.8" fill="#585858" />
<rect x="885.3" y="501.3" width="21.4" height="20.8" fill="none" stroke="#6c6c6c" stroke-width="1"/>
<line x1="885" y1="511.9" x2="907" y2="511.9" stroke="#1c1c1c" stroke-width="1.2" />
<path d="M888 510.5 L896 501.9 L904 510.5 Z M888 513.4 L896 521.3 L904 513.4 Z" fill="#262626" stroke="#f4f4f4" stroke-width="0.9"/>
<rect x="885" y="523.4" width="22" height="12.2" fill="#2e2e2e" />
<rect x="884.5" y="500.3" width="23" height="35.6" fill="none" stroke="#505050" stroke-width="1"/>
<rect x="3" y="538" width="71.5" height="36" fill="#2c5682" />
<rect x="3" y="538" width="71.5" height="12" fill="#fafa0a" />
<rect x="3.5" y="538.5" width="70.5" height="35" fill="none" stroke="#3d8fe0" stroke-width="1"/>
<text transform="translate(5.5 547.8) scale(0.958 1)" font-size="9.9" fill="#262600" text-anchor="start">Z1</text>
<text transform="translate(72.6 547.8) scale(0.958 1)" font-size="9.9" fill="#262600" text-anchor="end">zoom(F1)</text>
<text transform="translate(73 560.4) scale(0.958 1)" font-size="9.9" fill="#f4f4f4" stroke="#f4f4f4" stroke-width="0.3" text-anchor="end">3.45 V/div</text>
<text transform="translate(73 571.3) scale(0.958 1)" font-size="9.9" fill="#f4f4f4" stroke="#f4f4f4" stroke-width="0.3" text-anchor="end">50.0 µs/div</text>
<rect x="76.5" y="538.5" width="71" height="35" fill="none" stroke="#e8e8e8" stroke-width="1" stroke-dasharray="2 2"/>
<path d="M105.5 555.8 h10.5 M110.75 550.5 v10.5" stroke="#fff" stroke-width="1.4"/>
<rect x="781.5" y="538" width="81" height="36" fill="#484848" />
<rect x="781.5" y="538" width="81" height="11.5" fill="#f6f6f6" />
<text transform="translate(783 547.6) scale(0.958 1)" font-size="9.9" fill="#222" stroke="#222" stroke-width="0.3" text-anchor="start">Tbase</text>
<text transform="translate(861.4 547.6) scale(0.958 1)" font-size="9.9" fill="#222" stroke="#222" stroke-width="0.3" text-anchor="end">0.00 µs</text>
<text transform="translate(861.8 560.4) scale(0.958 1)" font-size="9.9" fill="#f4f4f4" stroke="#f4f4f4" stroke-width="0.3" text-anchor="end">2.00 µs/div</text>
<text transform="translate(783 571.3) scale(0.958 1)" font-size="9.9" fill="#f4f4f4" stroke="#f4f4f4" stroke-width="0.3" text-anchor="start">20 S</text>
<text transform="translate(861.8 571.3) scale(0.958 1)" font-size="9.9" fill="#f4f4f4" stroke="#f4f4f4" stroke-width="0.3" text-anchor="end">1 MS/s</text>
<rect x="865" y="538" width="70.5" height="36" fill="#484848" />
<rect x="865" y="538" width="70.5" height="11.5" fill="#f6f6f6" />
<text transform="translate(867.5 547.6) scale(0.958 1)" font-size="9.9" fill="#222" stroke="#222" stroke-width="0.3" text-anchor="start">Trigger</text>
<rect x="902.2" y="538.5" width="14" height="9.3" rx="1.6" fill="#0c0c0c"/>
<rect x="918.9" y="538.5" width="15.7" height="9.3" rx="1.6" fill="#0c0c0c"/>
<text x="909.2" y="546.2" font-size="8.2" fill="#fff" text-anchor="middle" >C1</text>
<text x="926.8" y="546.2" font-size="8.2" fill="#fff" text-anchor="middle" >DC</text>
<text transform="translate(867.5 560.4) scale(0.958 1)" font-size="9.9" fill="#f4f4f4" stroke="#f4f4f4" stroke-width="0.3" text-anchor="start">Stop</text>
<text transform="translate(934.8 560.4) scale(0.958 1)" font-size="9.9" fill="#f4f4f4" stroke="#f4f4f4" stroke-width="0.3" text-anchor="end">1.55 V</text>
<text transform="translate(867.5 571.3) scale(0.958 1)" font-size="9.9" fill="#f4f4f4" stroke="#f4f4f4" stroke-width="0.3" text-anchor="start">Edge</text>
<text transform="translate(934.8 571.3) scale(0.958 1)" font-size="9.9" fill="#f4f4f4" stroke="#f4f4f4" stroke-width="0.3" text-anchor="end">Positive</text>
<rect x="0" y="575" width="940" height="13" fill="#2a2a2a" />
<line x1="0" y1="576" x2="940" y2="576" stroke="#454545" stroke-width="1.8" />
<text x="4.9" y="586.3" font-size="10.8" fill="#fff" text-anchor="start" font-weight="bold" textLength="49" lengthAdjust="spacingAndGlyphs" >TELEDYNE</text>
<text x="56.7" y="586.3" font-size="10.8" fill="#f0f0f0" stroke="#f0f0f0" stroke-width="0.3" text-anchor="start" textLength="33.3" lengthAdjust="spacingAndGlyphs" >LECROY</text>
<text x="836.8" y="585" font-size="9.1" fill="#f0f0f0" stroke="#f0f0f0" stroke-width="0.3" text-anchor="start" textLength="89.2" lengthAdjust="spacingAndGlyphs" >3/31/2016 11:42:42 AM</text>
</svg>
</body></html>
